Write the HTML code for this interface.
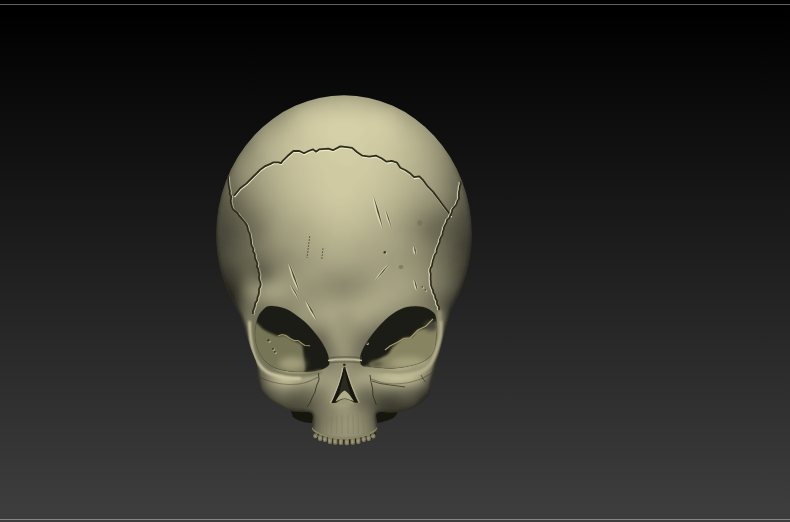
<!DOCTYPE html>
<html><head><meta charset="utf-8">
<style>
html,body{margin:0;padding:0;width:790px;height:522px;overflow:hidden;background:#000;font-family:"Liberation Sans",sans-serif;}
svg{display:block;position:absolute;left:0;top:0;}
</style></head>
<body>
<svg width="790" height="522" viewBox="0 0 790 522">
<defs>
  <linearGradient id="bg" x1="0" y1="0" x2="0" y2="522" gradientUnits="userSpaceOnUse">
    <stop offset="0" stop-color="#000"/>
    <stop offset="0.023" stop-color="#000"/>
    <stop offset="0.977" stop-color="#3d3d3d"/>
    <stop offset="1" stop-color="#3d3d3d"/>
  </linearGradient>
  <linearGradient id="og" x1="0" y1="140" x2="0" y2="260" gradientUnits="userSpaceOnUse">
    <stop offset="0" stop-color="#2c2b20" stop-opacity="0"/>
    <stop offset="1" stop-color="#2c2b20" stop-opacity="1"/>
  </linearGradient>
  <filter id="b05" x="-50%" y="-50%" width="200%" height="200%"><feGaussianBlur stdDeviation="0.5"/></filter>
  <filter id="b1" x="-50%" y="-50%" width="200%" height="200%"><feGaussianBlur stdDeviation="1"/></filter>
  <filter id="b15" x="-50%" y="-50%" width="200%" height="200%"><feGaussianBlur stdDeviation="1.5"/></filter>
  <filter id="b2" x="-50%" y="-50%" width="200%" height="200%"><feGaussianBlur stdDeviation="2"/></filter>
  <filter id="b3" x="-50%" y="-50%" width="200%" height="200%"><feGaussianBlur stdDeviation="3"/></filter>
  <filter id="b4" x="-50%" y="-50%" width="200%" height="200%"><feGaussianBlur stdDeviation="4"/></filter>
  <filter id="fb" x="-5%" y="-5%" width="110%" height="110%"><feGaussianBlur stdDeviation="2.5"/></filter>
  <clipPath id="sil"><path d="M450.5,310.0 C449.8,313.8 447.7,320.7 446.5,325.0 C445.3,329.3 444.6,331.8 443.5,336.0 C442.4,340.2 441.3,345.2 440.0,350.0 C438.7,354.8 436.8,360.0 435.5,365.0 C434.2,370.0 432.9,375.3 432.0,380.0 C431.1,384.7 431.2,389.8 430.0,393.0 C428.8,396.2 427.4,396.7 425.0,399.0 C422.6,401.3 419.0,404.8 415.6,406.7 C412.2,408.6 408.7,409.5 404.8,410.5 C400.9,411.5 396.6,412.1 392.0,412.5 C387.4,412.9 379.4,410.8 377.0,413.0 C374.6,415.2 377.7,422.8 377.5,426.0 C377.3,429.2 378.6,430.5 376.0,432.5 C373.4,434.5 367.2,436.9 362.0,438.2 C356.8,439.5 350.3,440.2 344.5,440.2 C338.7,440.2 332.2,439.5 327.0,438.2 C321.8,436.9 315.5,434.5 313.0,432.5 C310.5,430.5 312.1,429.2 311.8,426.0 C311.6,422.8 314.7,415.4 311.5,413.0 C308.3,410.6 296.9,412.0 292.5,411.3 C288.1,410.6 287.6,410.3 284.8,409.0 C282.0,407.7 278.5,405.3 275.7,403.6 C272.9,401.9 270.6,401.0 268.0,399.0 C265.4,397.0 262.0,394.6 260.3,391.4 C258.6,388.2 258.6,384.4 258.0,380.0 C257.4,375.6 258.1,370.0 257.0,365.0 C255.9,360.0 253.2,354.8 251.5,350.0 C249.8,345.2 248.3,340.3 247.0,336.0 C245.7,331.7 244.7,327.3 243.7,324.0 C242.7,320.7 241.5,319.0 240.9,316.0 C240.3,313.0 237.5,309.3 240.0,306.0 C242.5,302.7 246.0,297.8 256.0,296.0 C266.0,294.2 277.7,295.2 300.0,295.0 C322.3,294.8 366.7,294.8 390.0,295.0 C413.3,295.2 429.8,294.8 440.0,296.0 C450.2,297.2 449.2,299.7 451.0,302.0 C452.8,304.3 451.2,306.2 450.5,310.0 Z"/><path d="M216.3,234 A127.7,138.7 0 1,1 471.7,234 A127.7,138.7 0 1,1 216.3,234 Z"/></clipPath>
  <clipPath id="lsockc"><path d="M270.0,306.0 C274.0,305.7 281.0,307.0 286.0,309.0 C291.0,311.0 296.3,315.3 300.0,318.0 C303.7,320.7 305.5,322.5 308.0,325.0 C310.5,327.5 312.8,330.3 315.0,333.0 C317.2,335.7 319.2,338.2 321.0,341.0 C322.8,343.8 324.7,347.0 326.0,350.0 C327.3,353.0 328.7,356.3 329.0,359.0 C329.3,361.7 330.2,364.0 328.0,366.0 C325.8,368.0 321.1,370.0 316.0,371.0 C310.9,372.0 303.8,372.3 297.5,372.0 C291.2,371.7 283.2,370.7 278.0,369.0 C272.8,367.3 269.3,365.2 266.0,362.0 C262.7,358.8 259.8,354.3 258.0,350.0 C256.2,345.7 255.2,341.0 255.0,336.0 C254.8,331.0 255.8,324.2 257.0,320.0 C258.2,315.8 259.8,313.3 262.0,311.0 C264.2,308.7 266.0,306.3 270.0,306.0 Z"/></clipPath>
  <clipPath id="rsockc"><path d="M407.0,307.0 C411.8,306.0 418.5,306.0 423.0,307.0 C427.5,308.0 431.7,310.5 434.0,313.0 C436.3,315.5 436.2,318.5 436.7,322.0 C437.1,325.5 437.1,329.2 436.7,334.0 C436.2,338.8 435.8,346.1 434.0,350.5 C432.2,354.9 429.6,357.7 425.7,360.2 C421.8,362.7 416.0,364.3 410.5,365.7 C405.0,367.1 398.4,368.1 392.6,368.4 C386.9,368.7 380.9,367.9 376.0,367.5 C371.1,367.1 365.7,367.2 363.0,366.0 C360.3,364.8 360.1,362.7 360.0,360.0 C359.9,357.3 360.7,354.0 362.5,350.0 C364.3,346.0 367.6,340.6 371.0,336.0 C374.4,331.4 378.8,326.4 382.6,322.6 C386.4,318.8 389.9,315.6 394.0,313.0 C398.1,310.4 402.2,308.0 407.0,307.0 Z"/></clipPath>
</defs>
<rect x="0" y="0" width="790" height="522" fill="url(#bg)"/>
<rect x="0" y="4" width="790" height="1" fill="#626262"/>
<rect x="0" y="519" width="790" height="1" fill="#868686"/>

<path d="M290,409 C298,412 306,412 314,412 L314,423 C305,423 298,421 293,417 Z" fill="#17160f" filter="url(#b05)"/>
<path d="M376,412 C386,412 394,412 398,410 C397,417 392,421 376,423 Z" fill="#17160f" filter="url(#b05)"/>
<g clip-path="url(#sil)"><g filter="url(#fb)">
<path fill="#8a876c" d="M308 90h4v4h-4zM300 94h4v4h-4zM384 94h4v4h-4zM396 98h4v4h-4zM276 110h4v4h-4zM264 118h4v4h-4zM260 122h4v4h-4zM440 138h4v4h-4zM248 146h4v4h-4zM240 162h4v4h-4zM444 162h4v4h-4zM444 166h4v4h-4zM444 170h4v4h-4zM444 174h4v4h-4zM240 178h4v4h-4zM244 186h4v4h-4zM248 194h4v4h-4zM440 194h4v4h-4zM436 202h4v4h-4zM256 206h4v4h-4zM424 210h4v4h-4zM260 214h4v4h-4zM420 214h4v4h-4zM264 222h4v4h-4zM416 222h4v4h-4zM416 234h4v4h-4zM416 238h4v4h-4zM268 242h4v4h-4zM420 246h4v4h-4zM272 250h4v4h-4zM420 250h4v4h-4zM276 254h4v4h-4zM420 254h4v4h-4zM280 258h4v4h-4zM280 262h4v4h-4zM424 262h4v4h-4zM280 266h4v4h-4zM424 266h4v4h-4zM424 286h4v4h-4zM252 294h4v4h-4zM420 294h4v4h-4zM260 298h4v4h-4zM268 302h4v4h-4zM416 302h4v4h-4zM280 306h8v4h-8zM412 306h4v4h-4zM288 310h4v4h-4zM408 310h8v4h-8zM400 314h8v4h-8zM292 318h4v4h-4zM384 318h4v4h-4zM296 322h4v4h-4zM316 326h4v4h-4zM324 330h4v4h-4zM352 338h4v4h-4zM420 350h8v4h-8zM404 354h8v4h-8zM296 358h4v4h-4zM336 358h4v4h-4zM348 358h4v4h-4zM312 362h4v4h-4zM336 362h4v4h-4zM384 362h4v4h-4zM324 366h8v4h-8zM428 366h4v4h-4zM276 386h4v4h-4zM292 386h4v4h-4zM316 386h4v4h-4zM400 386h4v4h-4zM352 394h4v4h-4zM328 402h4v4h-4zM352 406h4v4h-4zM332 410h4v4h-4zM332 414h4v4h-4zM356 414h4v4h-4zM332 418h4v4h-4zM360 422h4v4h-4zM328 426h4v4h-4zM324 438h4v4h-4zM364 438h4v4h-4zM324 442h4v4h-4zM364 442h4v4h-4zM324 446h4v4h-4zM360 446h4v4h-4zM324 450h8v4h-8zM356 450h8v4h-8z"/><path fill="#908d71" d="M312 90h4v4h-4zM372 90h4v4h-4zM304 94h4v4h-4zM380 94h4v4h-4zM388 98h4v4h-4zM400 102h4v4h-4zM284 106h4v4h-4zM408 106h4v4h-4zM280 110h4v4h-4zM416 110h4v4h-4zM420 114h4v4h-4zM268 118h4v4h-4zM424 118h4v4h-4zM264 122h4v4h-4zM428 122h4v4h-4zM260 126h4v4h-4zM432 126h4v4h-4zM436 134h4v4h-4zM252 142h4v4h-4zM248 150h4v4h-4zM440 150h4v4h-4zM440 154h4v4h-4zM244 158h4v4h-4zM440 158h4v4h-4zM440 162h4v4h-4zM440 170h4v4h-4zM440 174h4v4h-4zM244 178h4v4h-4zM440 178h4v4h-4zM440 182h4v4h-4zM248 186h4v4h-4zM252 194h4v4h-4zM436 194h4v4h-4zM260 206h4v4h-4zM424 206h4v4h-4zM420 210h4v4h-4zM264 214h4v4h-4zM416 214h4v4h-4zM412 222h4v4h-4zM268 226h4v4h-4zM268 230h4v4h-4zM412 234h4v4h-4zM412 238h4v4h-4zM272 242h4v4h-4zM276 246h4v4h-4zM280 250h4v4h-4zM416 250h4v4h-4zM284 254h4v4h-4zM416 254h4v4h-4zM284 258h4v4h-4zM416 258h4v4h-4zM284 266h4v4h-4zM420 266h4v4h-4zM420 270h4v4h-4zM340 278h8v4h-8zM332 282h8v4h-8zM348 282h8v4h-8zM256 286h4v4h-4zM328 286h12v4h-12zM348 286h4v4h-4zM420 286h4v4h-4zM252 290h4v4h-4zM336 290h12v4h-12zM256 294h4v4h-4zM416 294h4v4h-4zM264 298h4v4h-4zM276 302h16v4h-16zM292 306h4v4h-4zM408 306h4v4h-4zM292 310h4v4h-4zM400 310h4v4h-4zM388 314h4v4h-4zM296 318h4v4h-4zM380 318h4v4h-4zM312 322h4v4h-4zM360 326h4v4h-4zM352 330h4v4h-4zM348 338h4v4h-4zM348 342h4v4h-4zM348 346h4v4h-4zM336 350h4v4h-4zM344 354h4v4h-4zM416 354h4v4h-4zM288 358h4v4h-4zM340 358h8v4h-8zM428 358h4v4h-4zM308 362h4v4h-4zM340 362h8v4h-8zM336 366h4v4h-4zM348 366h4v4h-4zM360 366h4v4h-4zM268 374h4v4h-4zM268 378h4v4h-4zM420 378h4v4h-4zM356 386h4v4h-4zM328 398h4v4h-4zM336 410h4v4h-4zM336 414h4v4h-4zM352 414h4v4h-4zM336 418h4v4h-4zM356 422h4v4h-4zM332 426h4v4h-4zM356 426h4v4h-4zM332 430h4v4h-4zM356 430h4v4h-4zM332 434h4v4h-4zM356 434h4v4h-4zM332 438h8v4h-8zM352 438h8v4h-8zM332 442h24v4h-24zM336 446h16v4h-16z"/><path fill="#939073" d="M316 90h4v4h-4zM300 98h4v4h-4zM292 102h4v4h-4zM412 110h4v4h-4zM276 114h4v4h-4zM432 130h4v4h-4zM256 134h4v4h-4zM436 138h4v4h-4zM436 142h4v4h-4zM248 154h4v4h-4zM244 162h4v4h-4zM244 166h4v4h-4zM440 166h4v4h-4zM244 174h4v4h-4zM248 182h4v4h-4zM252 190h4v4h-4zM436 190h4v4h-4zM256 198h4v4h-4zM432 198h4v4h-4zM428 202h4v4h-4zM264 210h4v4h-4zM268 218h4v4h-4zM412 218h4v4h-4zM268 222h4v4h-4zM408 226h4v4h-4zM408 230h4v4h-4zM408 234h4v4h-4zM272 238h4v4h-4zM412 242h4v4h-4zM412 246h4v4h-4zM284 250h4v4h-4zM412 250h4v4h-4zM288 254h4v4h-4zM412 254h4v4h-4zM288 258h4v4h-4zM412 258h4v4h-4zM288 262h4v4h-4zM416 262h4v4h-4zM288 266h4v4h-4zM416 266h4v4h-4zM284 270h4v4h-4zM280 274h4v4h-4zM420 274h4v4h-4zM276 278h4v4h-4zM332 278h8v4h-8zM348 278h8v4h-8zM420 278h4v4h-4zM268 282h4v4h-4zM324 282h8v4h-8zM356 282h4v4h-4zM420 282h4v4h-4zM260 286h4v4h-4zM324 286h4v4h-4zM352 286h8v4h-8zM256 290h4v4h-4zM328 290h8v4h-8zM348 290h4v4h-4zM416 290h4v4h-4zM260 294h4v4h-4zM268 298h4v4h-4zM288 298h4v4h-4zM412 298h4v4h-4zM292 302h4v4h-4zM408 302h4v4h-4zM296 306h4v4h-4zM404 306h4v4h-4zM296 310h4v4h-4zM396 310h4v4h-4zM296 314h4v4h-4zM384 314h4v4h-4zM300 318h4v4h-4zM376 318h4v4h-4zM316 322h4v4h-4zM368 322h4v4h-4zM324 326h4v4h-4zM356 326h4v4h-4zM328 330h4v4h-4zM348 334h4v4h-4zM332 338h4v4h-4zM336 346h4v4h-4zM340 354h4v4h-4zM400 358h12v4h-12zM304 362h4v4h-4zM388 362h4v4h-4zM276 366h4v4h-4zM316 366h4v4h-4zM340 366h8v4h-8zM364 366h4v4h-4zM272 370h4v4h-4zM324 370h16v4h-16zM348 370h4v4h-4zM280 386h8v4h-8zM324 386h4v4h-4zM352 390h4v4h-4zM328 394h4v4h-4zM348 406h4v4h-4zM348 410h4v4h-4zM340 414h4v4h-4zM348 414h4v4h-4zM352 418h4v4h-4zM336 422h4v4h-4zM352 422h4v4h-4zM336 426h4v4h-4zM336 430h4v4h-4zM352 430h4v4h-4zM336 434h8v4h-8zM348 434h8v4h-8zM340 438h12v4h-12z"/><path fill="#999578" d="M320 90h8v4h-8zM364 90h4v4h-4zM312 94h4v4h-4zM304 98h4v4h-4zM296 102h4v4h-4zM392 102h4v4h-4zM284 110h4v4h-4zM408 110h4v4h-4zM280 114h4v4h-4zM264 126h4v4h-4zM428 130h4v4h-4zM256 138h4v4h-4zM432 138h4v4h-4zM252 150h4v4h-4zM436 154h4v4h-4zM436 158h4v4h-4zM248 162h4v4h-4zM436 162h4v4h-4zM248 166h4v4h-4zM436 166h4v4h-4zM248 170h4v4h-4zM436 170h4v4h-4zM248 174h4v4h-4zM436 174h4v4h-4zM252 182h4v4h-4zM256 190h4v4h-4zM432 190h4v4h-4zM428 194h4v4h-4zM260 198h4v4h-4zM424 198h4v4h-4zM420 202h4v4h-4zM416 206h4v4h-4zM268 210h4v4h-4zM412 210h4v4h-4zM408 218h4v4h-4zM272 222h4v4h-4zM272 226h4v4h-4zM404 226h4v4h-4zM404 230h4v4h-4zM276 234h4v4h-4zM404 234h4v4h-4zM404 238h4v4h-4zM280 242h4v4h-4zM404 242h4v4h-4zM284 246h4v4h-4zM404 246h4v4h-4zM404 250h4v4h-4zM292 254h4v4h-4zM404 254h4v4h-4zM296 258h4v4h-4zM404 258h4v4h-4zM296 262h4v4h-4zM404 262h8v4h-8zM296 266h4v4h-4zM408 266h4v4h-4zM292 270h8v4h-8zM412 270h4v4h-4zM288 274h8v4h-8zM324 274h8v4h-8zM356 274h8v4h-8zM412 274h4v4h-4zM280 278h8v4h-8zM316 278h8v4h-8zM360 278h8v4h-8zM416 278h4v4h-4zM272 282h4v4h-4zM304 282h12v4h-12zM364 282h4v4h-4zM416 282h4v4h-4zM264 286h4v4h-4zM300 286h8v4h-8zM360 286h4v4h-4zM260 290h4v4h-4zM296 290h12v4h-12zM356 290h4v4h-4zM412 290h4v4h-4zM264 294h4v4h-4zM288 294h44v4h-44zM348 294h8v4h-8zM304 298h8v4h-8zM304 302h4v4h-4zM400 302h4v4h-4zM300 306h4v4h-4zM396 306h4v4h-4zM300 310h4v4h-4zM388 310h4v4h-4zM300 314h8v4h-8zM380 314h4v4h-4zM312 318h4v4h-4zM320 322h4v4h-4zM360 322h4v4h-4zM328 326h4v4h-4zM344 326h8v4h-8zM344 330h4v4h-4zM332 334h4v4h-4zM336 338h8v4h-8zM340 342h4v4h-4zM340 346h4v4h-4zM300 362h4v4h-4zM392 362h4v4h-4zM428 362h4v4h-4zM312 366h4v4h-4zM372 366h8v4h-8zM360 370h4v4h-4zM324 374h32v4h-32zM348 378h4v4h-4zM300 382h12v4h-12zM324 382h4v4h-4zM356 382h8v4h-8zM372 382h4v4h-4zM412 382h4v4h-4zM328 386h4v4h-4zM352 386h4v4h-4zM348 398h4v4h-4zM344 406h4v4h-4zM344 422h8v4h-8zM344 426h8v4h-8z"/><path fill="#9c987a" d="M328 90h4v4h-4zM356 90h8v4h-8zM372 94h4v4h-4zM380 98h4v4h-4zM388 102h4v4h-4zM400 106h4v4h-4zM412 114h4v4h-4zM276 118h4v4h-4zM416 118h4v4h-4zM272 122h4v4h-4zM420 122h4v4h-4zM424 126h4v4h-4zM260 134h4v4h-4zM428 134h4v4h-4zM256 142h4v4h-4zM432 142h4v4h-4zM432 146h4v4h-4zM252 154h4v4h-4zM252 158h4v4h-4zM252 178h4v4h-4zM432 178h4v4h-4zM432 182h4v4h-4zM256 186h4v4h-4zM432 186h4v4h-4zM428 190h4v4h-4zM260 194h4v4h-4zM264 202h4v4h-4zM268 206h4v4h-4zM272 214h4v4h-4zM408 214h4v4h-4zM272 218h4v4h-4zM404 222h4v4h-4zM276 230h4v4h-4zM280 238h4v4h-4zM284 242h4v4h-4zM288 246h4v4h-4zM292 250h4v4h-4zM400 250h4v4h-4zM296 254h4v4h-4zM400 254h4v4h-4zM300 258h4v4h-4zM400 258h4v4h-4zM300 262h4v4h-4zM400 262h4v4h-4zM300 266h4v4h-4zM404 266h4v4h-4zM300 270h4v4h-4zM324 270h40v4h-40zM408 270h4v4h-4zM296 274h12v4h-12zM316 274h8v4h-8zM364 274h8v4h-8zM408 274h4v4h-4zM288 278h28v4h-28zM368 278h4v4h-4zM412 278h4v4h-4zM276 282h4v4h-4zM288 282h16v4h-16zM368 282h4v4h-4zM412 282h4v4h-4zM292 286h8v4h-8zM364 286h4v4h-4zM412 286h4v4h-4zM264 290h4v4h-4zM288 290h8v4h-8zM360 290h4v4h-4zM268 294h4v4h-4zM280 294h8v4h-8zM356 294h4v4h-4zM408 294h4v4h-4zM312 298h36v4h-36zM404 298h4v4h-4zM308 302h8v4h-8zM396 302h4v4h-4zM304 306h8v4h-8zM392 306h4v4h-4zM304 310h8v4h-8zM384 310h4v4h-4zM308 314h4v4h-4zM376 314h4v4h-4zM316 318h4v4h-4zM368 318h4v4h-4zM324 322h4v4h-4zM344 322h16v4h-16zM340 326h4v4h-4zM332 330h4v4h-4zM340 330h4v4h-4zM336 334h8v4h-8zM416 358h4v4h-4zM296 362h4v4h-4zM412 362h4v4h-4zM308 366h4v4h-4zM380 366h4v4h-4zM316 370h4v4h-4zM364 370h4v4h-4zM320 374h4v4h-4zM320 378h8v4h-8zM340 378h8v4h-8zM352 378h4v4h-4zM296 382h4v4h-4zM328 382h4v4h-4zM348 382h8v4h-8zM348 390h4v4h-4zM332 394h4v4h-4zM348 394h4v4h-4zM332 398h4v4h-4zM340 406h4v4h-4z"/><path fill="#9f9b7d" d="M332 90h24v4h-24zM316 94h4v4h-4zM368 94h4v4h-4zM308 98h4v4h-4zM300 102h4v4h-4zM292 106h4v4h-4zM288 110h4v4h-4zM404 110h4v4h-4zM268 126h4v4h-4zM264 130h4v4h-4zM424 130h4v4h-4zM428 138h4v4h-4zM256 146h4v4h-4zM432 150h4v4h-4zM432 154h4v4h-4zM432 158h4v4h-4zM252 162h4v4h-4zM432 162h4v4h-4zM252 166h4v4h-4zM432 166h4v4h-4zM252 170h4v4h-4zM432 170h4v4h-4zM252 174h4v4h-4zM432 174h4v4h-4zM256 182h4v4h-4zM428 186h4v4h-4zM260 190h4v4h-4zM424 194h4v4h-4zM264 198h4v4h-4zM420 198h4v4h-4zM416 202h4v4h-4zM412 206h4v4h-4zM272 210h4v4h-4zM408 210h4v4h-4zM404 214h4v4h-4zM404 218h4v4h-4zM276 222h4v4h-4zM400 222h4v4h-4zM276 226h4v4h-4zM400 226h4v4h-4zM280 230h4v4h-4zM400 230h4v4h-4zM280 234h8v4h-8zM400 234h4v4h-4zM284 238h4v4h-4zM400 238h4v4h-4zM288 242h4v4h-4zM400 242h4v4h-4zM292 246h4v4h-4zM396 246h8v4h-8zM296 250h4v4h-4zM396 250h4v4h-4zM300 254h8v4h-8zM392 254h8v4h-8zM304 258h4v4h-4zM388 258h12v4h-12zM304 262h8v4h-8zM388 262h12v4h-12zM304 266h8v4h-8zM344 266h24v4h-24zM392 266h12v4h-12zM304 270h20v4h-20zM364 270h12v4h-12zM400 270h8v4h-8zM308 274h8v4h-8zM372 274h4v4h-4zM404 274h4v4h-4zM372 278h4v4h-4zM408 278h4v4h-4zM280 282h8v4h-8zM372 282h4v4h-4zM408 282h4v4h-4zM268 286h4v4h-4zM284 286h8v4h-8zM368 286h4v4h-4zM408 286h4v4h-4zM284 290h4v4h-4zM364 290h4v4h-4zM408 290h4v4h-4zM272 294h8v4h-8zM360 294h4v4h-4zM404 294h4v4h-4zM348 298h8v4h-8zM400 298h4v4h-4zM316 302h8v4h-8zM392 302h4v4h-4zM312 306h4v4h-4zM388 306h4v4h-4zM312 310h4v4h-4zM380 310h4v4h-4zM312 314h4v4h-4zM372 314h4v4h-4zM320 318h4v4h-4zM340 318h12v4h-12zM364 318h4v4h-4zM328 322h4v4h-4zM336 322h8v4h-8zM332 326h8v4h-8zM336 330h4v4h-4zM284 362h4v4h-4zM292 362h4v4h-4zM396 362h4v4h-4zM408 362h4v4h-4zM316 374h4v4h-4zM356 374h4v4h-4zM420 374h4v4h-4zM316 378h4v4h-4zM328 378h12v4h-12zM332 382h4v4h-4zM340 382h8v4h-8zM376 382h4v4h-4zM332 386h4v4h-4zM348 386h4v4h-4zM332 390h4v4h-4zM336 402h4v4h-4z"/><path fill="#969376" d="M368 90h4v4h-4zM308 94h4v4h-4zM376 94h4v4h-4zM384 98h4v4h-4zM396 102h4v4h-4zM288 106h4v4h-4zM404 106h4v4h-4zM416 114h4v4h-4zM272 118h4v4h-4zM420 118h4v4h-4zM268 122h4v4h-4zM424 122h4v4h-4zM428 126h4v4h-4zM260 130h4v4h-4zM432 134h4v4h-4zM252 146h4v4h-4zM436 146h4v4h-4zM436 150h4v4h-4zM248 158h4v4h-4zM244 170h4v4h-4zM248 178h4v4h-4zM436 178h4v4h-4zM436 182h4v4h-4zM252 186h4v4h-4zM436 186h4v4h-4zM256 194h4v4h-4zM432 194h4v4h-4zM428 198h4v4h-4zM260 202h4v4h-4zM424 202h4v4h-4zM264 206h4v4h-4zM420 206h4v4h-4zM416 210h4v4h-4zM268 214h4v4h-4zM412 214h4v4h-4zM408 222h4v4h-4zM272 230h4v4h-4zM272 234h4v4h-4zM276 238h4v4h-4zM408 238h4v4h-4zM276 242h4v4h-4zM408 242h4v4h-4zM280 246h4v4h-4zM408 246h4v4h-4zM288 250h4v4h-4zM408 250h4v4h-4zM408 254h4v4h-4zM292 258h4v4h-4zM408 258h4v4h-4zM292 262h4v4h-4zM412 262h4v4h-4zM292 266h4v4h-4zM412 266h4v4h-4zM288 270h4v4h-4zM416 270h4v4h-4zM284 274h4v4h-4zM332 274h24v4h-24zM416 274h4v4h-4zM324 278h8v4h-8zM356 278h4v4h-4zM316 282h8v4h-8zM360 282h4v4h-4zM308 286h16v4h-16zM416 286h4v4h-4zM308 290h20v4h-20zM352 290h4v4h-4zM332 294h16v4h-16zM412 294h4v4h-4zM272 298h16v4h-16zM292 298h12v4h-12zM408 298h4v4h-4zM296 302h8v4h-8zM404 302h4v4h-4zM400 306h4v4h-4zM392 310h4v4h-4zM304 318h8v4h-8zM372 318h4v4h-4zM364 322h4v4h-4zM352 326h4v4h-4zM348 330h4v4h-4zM344 334h4v4h-4zM344 338h4v4h-4zM336 342h4v4h-4zM344 342h4v4h-4zM344 346h4v4h-4zM340 350h8v4h-8zM420 354h8v4h-8zM412 358h4v4h-4zM280 362h4v4h-4zM368 366h4v4h-4zM320 370h4v4h-4zM340 370h8v4h-8zM352 370h8v4h-8zM424 370h4v4h-4zM272 382h4v4h-4zM312 382h12v4h-12zM364 382h8v4h-8zM328 390h4v4h-4zM332 402h4v4h-4zM348 402h4v4h-4zM336 406h4v4h-4zM340 410h8v4h-8zM344 414h4v4h-4zM340 418h12v4h-12zM340 422h4v4h-4zM340 426h4v4h-4zM352 426h4v4h-4zM340 430h12v4h-12zM344 434h4v4h-4z"/><path fill="#8d8a6f" d="M376 90h4v4h-4zM296 98h4v4h-4zM392 98h4v4h-4zM288 102h4v4h-4zM404 102h4v4h-4zM272 114h4v4h-4zM256 130h4v4h-4zM436 130h4v4h-4zM252 138h4v4h-4zM440 142h4v4h-4zM440 146h4v4h-4zM244 154h4v4h-4zM240 166h4v4h-4zM240 170h4v4h-4zM240 174h4v4h-4zM244 182h4v4h-4zM440 186h4v4h-4zM248 190h4v4h-4zM440 190h4v4h-4zM252 198h4v4h-4zM436 198h4v4h-4zM256 202h4v4h-4zM432 202h4v4h-4zM428 206h4v4h-4zM260 210h4v4h-4zM264 218h4v4h-4zM416 218h4v4h-4zM412 226h4v4h-4zM412 230h4v4h-4zM268 234h4v4h-4zM268 238h4v4h-4zM416 242h4v4h-4zM272 246h4v4h-4zM416 246h4v4h-4zM276 250h4v4h-4zM280 254h4v4h-4zM420 258h4v4h-4zM284 262h4v4h-4zM420 262h4v4h-4zM280 270h4v4h-4zM424 270h4v4h-4zM276 274h4v4h-4zM424 274h4v4h-4zM272 278h4v4h-4zM424 278h4v4h-4zM264 282h4v4h-4zM340 282h8v4h-8zM424 282h4v4h-4zM252 286h4v4h-4zM340 286h8v4h-8zM420 290h4v4h-4zM416 298h4v4h-4zM272 302h4v4h-4zM412 302h4v4h-4zM288 306h4v4h-4zM404 310h4v4h-4zM292 314h4v4h-4zM392 314h8v4h-8zM300 322h12v4h-12zM372 322h4v4h-4zM320 326h4v4h-4zM364 326h4v4h-4zM356 330h4v4h-4zM328 334h4v4h-4zM352 334h4v4h-4zM332 342h4v4h-4zM348 350h4v4h-4zM336 354h4v4h-4zM348 354h4v4h-4zM412 354h4v4h-4zM284 358h4v4h-4zM292 358h4v4h-4zM396 358h4v4h-4zM348 362h4v4h-4zM320 366h4v4h-4zM332 366h4v4h-4zM352 366h8v4h-8zM416 382h4v4h-4zM288 386h4v4h-4zM320 386h4v4h-4zM324 390h4v4h-4zM332 406h4v4h-4zM352 410h4v4h-4zM356 418h4v4h-4zM332 422h4v4h-4zM360 426h4v4h-4zM328 430h4v4h-4zM360 430h4v4h-4zM328 434h4v4h-4zM360 434h4v4h-4zM328 438h4v4h-4zM360 438h4v4h-4zM328 442h4v4h-4zM356 442h8v4h-8zM328 446h8v4h-8zM352 446h8v4h-8zM332 450h24v4h-24z"/><path fill="#848168" d="M296 94h4v4h-4zM284 102h4v4h-4zM276 106h4v4h-4zM272 110h4v4h-4zM252 130h4v4h-4zM444 142h4v4h-4zM240 154h4v4h-4zM236 166h4v4h-4zM236 170h4v4h-4zM236 174h4v4h-4zM240 186h4v4h-4zM444 190h4v4h-4zM444 194h4v4h-4zM248 198h4v4h-4zM440 202h4v4h-4zM252 206h4v4h-4zM436 206h4v4h-4zM424 214h4v4h-4zM260 218h4v4h-4zM420 238h4v4h-4zM264 242h4v4h-4zM264 246h4v4h-4zM424 246h4v4h-4zM268 250h4v4h-4zM424 250h4v4h-4zM272 254h4v4h-4zM276 262h4v4h-4zM428 262h4v4h-4zM276 266h4v4h-4zM272 274h4v4h-4zM268 278h4v4h-4zM256 282h4v4h-4zM248 286h4v4h-4zM428 286h4v4h-4zM248 290h4v4h-4zM424 294h4v4h-4zM252 298h4v4h-4zM264 302h4v4h-4zM420 302h4v4h-4zM272 306h4v4h-4zM420 306h4v4h-4zM280 310h4v4h-4zM420 310h4v4h-4zM284 314h4v4h-4zM420 314h8v4h-8zM288 318h4v4h-4zM396 318h24v4h-24zM432 318h4v4h-4zM292 322h4v4h-4zM380 322h4v4h-4zM416 322h8v4h-8zM308 326h4v4h-4zM420 326h4v4h-4zM432 326h4v4h-4zM424 330h8v4h-8zM352 346h4v4h-4zM332 350h4v4h-4zM352 350h4v4h-4zM408 350h8v4h-8zM428 350h4v4h-4zM332 354h4v4h-4zM352 354h4v4h-4zM400 354h4v4h-4zM304 358h4v4h-4zM332 358h4v4h-4zM352 358h4v4h-4zM392 358h4v4h-4zM260 362h4v4h-4zM276 362h4v4h-4zM320 362h4v4h-4zM328 362h4v4h-4zM356 362h8v4h-8zM424 374h4v4h-4zM268 382h4v4h-4zM300 386h4v4h-4zM364 386h16v4h-16zM320 390h4v4h-4zM356 390h4v4h-4zM324 398h4v4h-4zM328 410h4v4h-4zM356 410h4v4h-4zM328 414h4v4h-4zM360 414h4v4h-4zM328 418h4v4h-4zM324 426h4v4h-4zM364 426h4v4h-4zM368 438h4v4h-4zM368 442h4v4h-4zM320 450h4v4h-4zM364 450h4v4h-4z"/><path fill="#a29e7f" d="M320 94h4v4h-4zM364 94h4v4h-4zM376 98h4v4h-4zM384 102h4v4h-4zM396 106h4v4h-4zM284 114h4v4h-4zM408 114h4v4h-4zM280 118h4v4h-4zM412 118h4v4h-4zM276 122h4v4h-4zM416 122h4v4h-4zM420 126h4v4h-4zM260 138h4v4h-4zM428 142h4v4h-4zM256 150h4v4h-4zM256 154h4v4h-4zM256 158h4v4h-4zM256 170h4v4h-4zM256 174h4v4h-4zM256 178h4v4h-4zM428 178h4v4h-4zM260 182h4v4h-4zM428 182h4v4h-4zM260 186h4v4h-4zM424 190h4v4h-4zM264 194h4v4h-4zM420 194h4v4h-4zM416 198h4v4h-4zM268 202h4v4h-4zM412 202h4v4h-4zM272 206h4v4h-4zM408 206h4v4h-4zM276 214h4v4h-4zM276 218h4v4h-4zM400 218h4v4h-4zM280 222h4v4h-4zM280 226h4v4h-4zM396 226h4v4h-4zM284 230h4v4h-4zM396 230h4v4h-4zM288 234h4v4h-4zM396 234h4v4h-4zM288 238h8v4h-8zM396 238h4v4h-4zM292 242h4v4h-4zM396 242h4v4h-4zM296 246h8v4h-8zM392 246h4v4h-4zM300 250h8v4h-8zM388 250h8v4h-8zM308 254h4v4h-4zM384 254h8v4h-8zM308 258h8v4h-8zM380 258h8v4h-8zM312 262h8v4h-8zM356 262h32v4h-32zM312 266h32v4h-32zM368 266h24v4h-24zM376 270h24v4h-24zM376 274h28v4h-28zM376 278h8v4h-8zM400 278h8v4h-8zM376 282h4v4h-4zM404 282h4v4h-4zM272 286h12v4h-12zM372 286h4v4h-4zM404 286h4v4h-4zM268 290h16v4h-16zM368 290h4v4h-4zM400 290h8v4h-8zM364 294h4v4h-4zM400 294h4v4h-4zM356 298h4v4h-4zM396 298h4v4h-4zM324 302h24v4h-24zM388 302h4v4h-4zM316 306h8v4h-8zM384 306h4v4h-4zM316 310h4v4h-4zM376 310h4v4h-4zM316 314h4v4h-4zM340 314h12v4h-12zM368 314h4v4h-4zM324 318h4v4h-4zM336 318h4v4h-4zM352 318h12v4h-12zM332 322h4v4h-4zM420 358h8v4h-8zM288 362h4v4h-4zM400 362h8v4h-8zM416 362h4v4h-4zM304 366h4v4h-4zM384 366h4v4h-4zM312 370h4v4h-4zM368 370h4v4h-4zM272 374h4v4h-4zM360 374h4v4h-4zM272 378h4v4h-4zM312 378h4v4h-4zM356 378h12v4h-12zM276 382h4v4h-4zM292 382h4v4h-4zM336 382h4v4h-4zM380 382h4v4h-4zM408 382h4v4h-4zM336 386h4v4h-4zM344 386h4v4h-4zM340 402h8v4h-8z"/><path fill="#a5a182" d="M324 94h8v4h-8zM360 94h4v4h-4zM312 98h4v4h-4zM372 98h4v4h-4zM304 102h4v4h-4zM400 110h4v4h-4zM272 126h4v4h-4zM268 130h4v4h-4zM420 130h4v4h-4zM264 134h4v4h-4zM424 134h4v4h-4zM424 138h4v4h-4zM260 142h4v4h-4zM428 146h4v4h-4zM428 150h4v4h-4zM428 154h4v4h-4zM428 158h4v4h-4zM256 162h4v4h-4zM428 162h4v4h-4zM256 166h4v4h-4zM428 166h4v4h-4zM428 170h4v4h-4zM260 174h4v4h-4zM428 174h4v4h-4zM260 178h4v4h-4zM424 182h4v4h-4zM264 186h4v4h-4zM424 186h4v4h-4zM264 190h4v4h-4zM420 190h4v4h-4zM268 194h4v4h-4zM416 194h4v4h-4zM268 198h4v4h-4zM412 198h4v4h-4zM272 202h4v4h-4zM276 210h4v4h-4zM404 210h4v4h-4zM400 214h4v4h-4zM280 218h4v4h-4zM396 222h4v4h-4zM284 226h8v4h-8zM288 230h8v4h-8zM392 230h4v4h-4zM292 234h4v4h-4zM392 234h4v4h-4zM296 238h4v4h-4zM392 238h4v4h-4zM296 242h8v4h-8zM388 242h8v4h-8zM304 246h4v4h-4zM384 246h8v4h-8zM308 250h4v4h-4zM380 250h8v4h-8zM312 254h4v4h-4zM372 254h12v4h-12zM316 258h4v4h-4zM360 258h20v4h-20zM320 262h36v4h-36zM384 278h16v4h-16zM380 282h24v4h-24zM376 286h28v4h-28zM372 290h8v4h-8zM392 290h8v4h-8zM368 294h4v4h-4zM392 294h8v4h-8zM360 298h4v4h-4zM388 298h8v4h-8zM348 302h8v4h-8zM384 302h4v4h-4zM324 306h28v4h-28zM380 306h4v4h-4zM320 310h8v4h-8zM336 310h16v4h-16zM372 310h4v4h-4zM320 314h8v4h-8zM332 314h8v4h-8zM352 314h4v4h-4zM364 314h4v4h-4zM328 318h8v4h-8zM280 366h4v4h-4zM424 366h4v4h-4zM276 370h4v4h-4zM372 370h4v4h-4zM312 374h4v4h-4zM364 374h4v4h-4zM368 378h4v4h-4zM416 378h4v4h-4zM384 382h8v4h-8zM404 382h4v4h-4zM340 386h4v4h-4zM336 390h4v4h-4zM344 390h4v4h-4zM336 394h4v4h-4zM336 398h4v4h-4z"/><path fill="#a8a484" d="M332 94h28v4h-28zM316 98h4v4h-4zM380 102h4v4h-4zM296 106h4v4h-4zM392 106h4v4h-4zM292 110h4v4h-4zM288 114h4v4h-4zM404 114h4v4h-4zM284 118h4v4h-4zM408 118h4v4h-4zM280 122h4v4h-4zM412 122h4v4h-4zM416 126h4v4h-4zM420 134h4v4h-4zM264 138h4v4h-4zM424 142h4v4h-4zM260 146h4v4h-4zM424 146h4v4h-4zM260 150h4v4h-4zM260 154h4v4h-4zM260 158h4v4h-4zM260 162h4v4h-4zM260 166h4v4h-4zM260 170h4v4h-4zM424 170h4v4h-4zM424 174h4v4h-4zM424 178h4v4h-4zM264 182h4v4h-4zM420 182h4v4h-4zM420 186h4v4h-4zM268 190h4v4h-4zM416 190h4v4h-4zM412 194h4v4h-4zM272 198h4v4h-4zM408 202h4v4h-4zM276 206h4v4h-4zM404 206h4v4h-4zM400 210h4v4h-4zM280 214h4v4h-4zM284 218h4v4h-4zM396 218h4v4h-4zM284 222h8v4h-8zM392 222h4v4h-4zM292 226h4v4h-4zM392 226h4v4h-4zM296 230h4v4h-4zM388 230h4v4h-4zM296 234h8v4h-8zM388 234h4v4h-4zM300 238h4v4h-4zM384 238h8v4h-8zM304 242h4v4h-4zM384 242h4v4h-4zM308 246h4v4h-4zM376 246h8v4h-8zM312 250h4v4h-4zM368 250h12v4h-12zM316 254h8v4h-8zM360 254h12v4h-12zM320 258h8v4h-8zM348 258h12v4h-12zM380 290h12v4h-12zM372 294h20v4h-20zM364 298h12v4h-12zM380 298h8v4h-8zM356 302h8v4h-8zM380 302h4v4h-4zM352 306h4v4h-4zM372 306h8v4h-8zM328 310h8v4h-8zM352 310h8v4h-8zM364 310h8v4h-8zM328 314h4v4h-4zM356 314h8v4h-8zM300 366h4v4h-4zM388 366h4v4h-4zM308 370h4v4h-4zM420 370h4v4h-4zM368 374h4v4h-4zM300 378h12v4h-12zM392 382h12v4h-12zM340 390h4v4h-4zM344 394h4v4h-4zM344 398h4v4h-4z"/><path fill="#87846a" d="M388 94h4v4h-4zM292 98h4v4h-4zM280 106h4v4h-4zM268 114h4v4h-4zM256 126h4v4h-4zM252 134h4v4h-4zM440 134h4v4h-4zM248 142h4v4h-4zM444 146h4v4h-4zM244 150h4v4h-4zM444 150h4v4h-4zM444 154h4v4h-4zM240 158h4v4h-4zM444 158h4v4h-4zM444 178h4v4h-4zM240 182h4v4h-4zM444 182h4v4h-4zM444 186h4v4h-4zM244 190h4v4h-4zM440 198h4v4h-4zM252 202h4v4h-4zM432 206h4v4h-4zM256 210h4v4h-4zM428 210h4v4h-4zM420 218h4v4h-4zM264 226h4v4h-4zM416 226h4v4h-4zM264 230h4v4h-4zM416 230h4v4h-4zM264 234h4v4h-4zM264 238h4v4h-4zM420 242h4v4h-4zM268 246h4v4h-4zM424 254h4v4h-4zM276 258h4v4h-4zM424 258h4v4h-4zM428 266h4v4h-4zM276 270h4v4h-4zM428 270h4v4h-4zM428 274h4v4h-4zM428 278h4v4h-4zM260 282h4v4h-4zM428 282h4v4h-4zM424 290h4v4h-4zM256 298h4v4h-4zM420 298h4v4h-4zM276 306h4v4h-4zM416 306h4v4h-4zM284 310h4v4h-4zM416 310h4v4h-4zM288 314h4v4h-4zM408 314h12v4h-12zM388 318h8v4h-8zM420 318h12v4h-12zM376 322h4v4h-4zM424 322h12v4h-12zM312 326h4v4h-4zM368 326h4v4h-4zM424 326h8v4h-8zM360 330h4v4h-4zM356 334h4v4h-4zM328 338h4v4h-4zM352 342h4v4h-4zM332 346h4v4h-4zM416 350h4v4h-4zM428 354h4v4h-4zM280 358h4v4h-4zM300 358h4v4h-4zM316 362h4v4h-4zM332 362h4v4h-4zM352 362h4v4h-4zM364 362h20v4h-20zM268 370h4v4h-4zM296 386h4v4h-4zM308 386h8v4h-8zM360 386h4v4h-4zM380 386h20v4h-20zM404 386h4v4h-4zM324 394h4v4h-4zM352 398h4v4h-4zM352 402h4v4h-4zM328 406h4v4h-4zM360 418h4v4h-4zM328 422h4v4h-4zM324 430h4v4h-4zM364 430h4v4h-4zM324 434h4v4h-4zM364 434h4v4h-4zM320 438h4v4h-4zM320 442h4v4h-4zM320 446h4v4h-4zM364 446h4v4h-4z"/><path fill="#817e65" d="M288 98h4v4h-4zM264 114h4v4h-4zM260 118h4v4h-4zM256 122h4v4h-4zM248 138h4v4h-4zM444 138h4v4h-4zM244 146h4v4h-4zM236 162h4v4h-4zM448 162h4v4h-4zM448 166h4v4h-4zM448 174h4v4h-4zM236 178h4v4h-4zM244 194h4v4h-4zM444 198h4v4h-4zM248 202h4v4h-4zM432 210h4v4h-4zM256 214h4v4h-4zM428 214h4v4h-4zM424 218h4v4h-4zM260 222h4v4h-4zM420 222h4v4h-4zM420 226h4v4h-4zM420 230h4v4h-4zM420 234h4v4h-4zM424 242h4v4h-4zM268 254h4v4h-4zM428 254h4v4h-4zM272 258h4v4h-4zM428 258h4v4h-4zM432 266h4v4h-4zM432 270h4v4h-4zM432 274h4v4h-4zM432 278h4v4h-4zM252 282h4v4h-4zM432 282h4v4h-4zM428 290h4v4h-4zM248 294h4v4h-4zM260 302h4v4h-4zM268 306h4v4h-4zM276 310h4v4h-4zM424 310h4v4h-4zM428 314h4v4h-4zM284 318h4v4h-4zM288 322h4v4h-4zM384 322h4v4h-4zM412 322h4v4h-4zM300 326h8v4h-8zM372 326h4v4h-4zM416 326h4v4h-4zM320 330h4v4h-4zM364 330h4v4h-4zM420 330h4v4h-4zM432 330h4v4h-4zM420 334h12v4h-12zM356 338h4v4h-4zM424 338h4v4h-4zM328 342h4v4h-4zM424 342h4v4h-4zM416 346h16v4h-16zM404 350h4v4h-4zM284 354h8v4h-8zM260 358h4v4h-4zM308 358h4v4h-4zM324 362h4v4h-4zM272 366h4v4h-4zM304 386h4v4h-4zM408 386h4v4h-4zM324 402h4v4h-4zM324 422h4v4h-4zM364 422h4v4h-4zM320 434h4v4h-4zM316 442h4v4h-4zM368 446h4v4h-4zM368 450h4v4h-4z"/><path fill="#aba786" d="M320 98h4v4h-4zM368 98h4v4h-4zM308 102h4v4h-4zM396 110h4v4h-4zM276 126h4v4h-4zM272 130h4v4h-4zM416 130h4v4h-4zM268 134h4v4h-4zM420 138h4v4h-4zM264 142h4v4h-4zM424 150h4v4h-4zM424 154h4v4h-4zM424 158h4v4h-4zM424 162h4v4h-4zM424 166h4v4h-4zM264 170h4v4h-4zM264 174h4v4h-4zM420 174h4v4h-4zM264 178h4v4h-4zM420 178h4v4h-4zM268 182h4v4h-4zM268 186h4v4h-4zM416 186h4v4h-4zM412 190h4v4h-4zM272 194h4v4h-4zM408 198h4v4h-4zM276 202h4v4h-4zM404 202h4v4h-4zM280 206h4v4h-4zM400 206h4v4h-4zM280 210h4v4h-4zM396 210h4v4h-4zM284 214h4v4h-4zM396 214h4v4h-4zM288 218h4v4h-4zM392 218h4v4h-4zM292 222h4v4h-4zM388 222h4v4h-4zM296 226h4v4h-4zM388 226h4v4h-4zM300 230h4v4h-4zM384 230h4v4h-4zM304 234h4v4h-4zM384 234h4v4h-4zM304 238h8v4h-8zM380 238h4v4h-4zM308 242h8v4h-8zM372 242h12v4h-12zM312 246h8v4h-8zM364 246h12v4h-12zM316 250h8v4h-8zM356 250h12v4h-12zM324 254h4v4h-4zM352 254h8v4h-8zM328 258h20v4h-20zM376 298h4v4h-4zM364 302h16v4h-16zM356 306h16v4h-16zM360 310h4v4h-4zM420 362h8v4h-8zM296 366h4v4h-4zM412 366h8v4h-8zM304 370h4v4h-4zM376 370h4v4h-4zM308 374h4v4h-4zM372 378h4v4h-4zM280 382h4v4h-4zM288 382h4v4h-4zM340 394h4v4h-4zM340 398h4v4h-4z"/><path fill="#aeaa89" d="M324 98h4v4h-4zM360 98h8v4h-8zM376 102h4v4h-4zM300 106h4v4h-4zM388 106h4v4h-4zM400 114h4v4h-4zM404 118h4v4h-4zM408 122h4v4h-4zM280 126h4v4h-4zM412 126h4v4h-4zM276 130h4v4h-4zM272 134h4v4h-4zM416 134h4v4h-4zM268 138h4v4h-4zM420 142h4v4h-4zM264 146h4v4h-4zM420 146h4v4h-4zM264 150h4v4h-4zM420 150h4v4h-4zM264 154h4v4h-4zM420 154h4v4h-4zM264 158h4v4h-4zM420 158h4v4h-4zM264 162h4v4h-4zM420 162h4v4h-4zM264 166h4v4h-4zM420 166h4v4h-4zM420 170h4v4h-4zM268 174h4v4h-4zM268 178h4v4h-4zM416 178h4v4h-4zM416 182h4v4h-4zM272 186h4v4h-4zM412 186h4v4h-4zM272 190h4v4h-4zM276 194h4v4h-4zM408 194h4v4h-4zM276 198h4v4h-4zM404 198h4v4h-4zM280 202h4v4h-4zM400 202h4v4h-4zM284 210h4v4h-4zM288 214h4v4h-4zM392 214h4v4h-4zM292 218h4v4h-4zM388 218h4v4h-4zM296 222h4v4h-4zM300 226h4v4h-4zM384 226h4v4h-4zM304 230h4v4h-4zM380 230h4v4h-4zM308 234h4v4h-4zM376 234h8v4h-8zM312 238h4v4h-4zM372 238h8v4h-8zM316 242h4v4h-4zM360 242h12v4h-12zM320 246h4v4h-4zM356 246h8v4h-8zM324 250h8v4h-8zM348 250h8v4h-8zM328 254h24v4h-24zM284 366h4v4h-4zM392 366h4v4h-4zM408 366h4v4h-4zM420 366h4v4h-4zM380 370h4v4h-4zM304 374h4v4h-4zM372 374h4v4h-4zM416 374h4v4h-4zM296 378h4v4h-4zM284 382h4v4h-4z"/><path fill="#b1ad8b" d="M328 98h12v4h-12zM352 98h8v4h-8zM312 102h4v4h-4zM372 102h4v4h-4zM304 106h4v4h-4zM384 106h4v4h-4zM296 110h4v4h-4zM292 114h4v4h-4zM288 118h4v4h-4zM284 122h4v4h-4zM408 126h4v4h-4zM412 130h4v4h-4zM416 138h4v4h-4zM268 142h4v4h-4zM268 162h4v4h-4zM416 162h4v4h-4zM268 166h4v4h-4zM416 166h4v4h-4zM268 170h4v4h-4zM416 170h4v4h-4zM416 174h4v4h-4zM272 178h4v4h-4zM412 178h4v4h-4zM272 182h4v4h-4zM412 182h4v4h-4zM408 186h4v4h-4zM276 190h4v4h-4zM408 190h4v4h-4zM404 194h4v4h-4zM280 198h4v4h-4zM400 198h4v4h-4zM284 202h4v4h-4zM284 206h4v4h-4zM396 206h4v4h-4zM288 210h4v4h-4zM392 210h4v4h-4zM292 214h4v4h-4zM388 214h4v4h-4zM296 218h8v4h-8zM384 218h4v4h-4zM300 222h8v4h-8zM380 222h8v4h-8zM304 226h8v4h-8zM380 226h4v4h-4zM308 230h4v4h-4zM376 230h4v4h-4zM312 234h4v4h-4zM368 234h8v4h-8zM316 238h4v4h-4zM360 238h12v4h-12zM320 242h8v4h-8zM352 242h8v4h-8zM324 246h8v4h-8zM344 246h12v4h-12zM332 250h16v4h-16zM288 366h8v4h-8zM396 366h4v4h-4zM404 366h4v4h-4zM300 370h4v4h-4zM416 370h4v4h-4zM300 374h4v4h-4zM376 378h4v4h-4zM412 378h4v4h-4z"/><path fill="#b4b08d" d="M340 98h12v4h-12zM316 102h4v4h-4zM368 102h4v4h-4zM380 106h4v4h-4zM392 110h4v4h-4zM396 114h4v4h-4zM400 118h4v4h-4zM404 122h4v4h-4zM284 126h4v4h-4zM280 130h4v4h-4zM276 134h4v4h-4zM412 134h4v4h-4zM272 138h4v4h-4zM272 142h4v4h-4zM416 142h4v4h-4zM268 146h4v4h-4zM416 146h4v4h-4zM268 150h4v4h-4zM416 150h4v4h-4zM268 154h4v4h-4zM416 154h4v4h-4zM268 158h4v4h-4zM416 158h4v4h-4zM272 166h4v4h-4zM412 166h4v4h-4zM272 170h4v4h-4zM412 170h4v4h-4zM272 174h4v4h-4zM412 174h4v4h-4zM276 178h4v4h-4zM408 178h4v4h-4zM276 182h4v4h-4zM408 182h4v4h-4zM276 186h4v4h-4zM404 186h4v4h-4zM280 190h4v4h-4zM404 190h4v4h-4zM280 194h4v4h-4zM400 194h4v4h-4zM284 198h4v4h-4zM396 198h4v4h-4zM288 202h4v4h-4zM396 202h4v4h-4zM288 206h4v4h-4zM392 206h4v4h-4zM292 210h4v4h-4zM388 210h4v4h-4zM296 214h8v4h-8zM384 214h4v4h-4zM304 218h4v4h-4zM380 218h4v4h-4zM308 222h4v4h-4zM376 222h4v4h-4zM312 226h4v4h-4zM372 226h8v4h-8zM312 230h8v4h-8zM368 230h8v4h-8zM316 234h8v4h-8zM360 234h8v4h-8zM320 238h8v4h-8zM352 238h8v4h-8zM328 242h24v4h-24zM332 246h12v4h-12zM400 366h4v4h-4zM280 370h4v4h-4zM384 370h4v4h-4zM276 374h4v4h-4zM376 374h4v4h-4zM276 378h4v4h-4z"/><path fill="#7e7b63" d="M280 102h4v4h-4zM268 110h4v4h-4zM252 126h4v4h-4zM248 134h4v4h-4zM244 142h4v4h-4zM448 146h4v4h-4zM240 150h4v4h-4zM448 150h4v4h-4zM448 154h4v4h-4zM236 158h4v4h-4zM448 158h4v4h-4zM448 170h4v4h-4zM448 178h4v4h-4zM236 182h4v4h-4zM448 182h4v4h-4zM448 186h4v4h-4zM240 190h4v4h-4zM448 190h4v4h-4zM244 198h4v4h-4zM248 206h4v4h-4zM440 206h4v4h-4zM252 210h4v4h-4zM436 210h4v4h-4zM256 218h4v4h-4zM260 226h4v4h-4zM260 230h4v4h-4zM260 234h4v4h-4zM260 238h4v4h-4zM424 238h4v4h-4zM260 242h4v4h-4zM260 246h4v4h-4zM428 246h4v4h-4zM264 250h4v4h-4zM428 250h4v4h-4zM432 258h4v4h-4zM272 262h4v4h-4zM432 262h4v4h-4zM272 270h4v4h-4zM432 286h4v4h-4zM428 294h4v4h-4zM424 298h4v4h-4zM256 302h4v4h-4zM424 302h4v4h-4zM424 306h4v4h-4zM272 310h4v4h-4zM428 310h4v4h-4zM280 314h4v4h-4zM432 314h4v4h-4zM248 318h4v4h-4zM436 318h4v4h-4zM388 322h24v4h-24zM436 322h4v4h-4zM296 326h4v4h-4zM376 326h4v4h-4zM412 326h4v4h-4zM316 330h4v4h-4zM368 330h4v4h-4zM416 330h4v4h-4zM324 334h4v4h-4zM360 334h4v4h-4zM420 338h4v4h-4zM428 338h4v4h-4zM356 342h4v4h-4zM416 342h8v4h-8zM428 342h4v4h-4zM412 346h4v4h-4zM260 354h4v4h-4zM292 354h4v4h-4zM396 354h4v4h-4zM312 358h4v4h-4zM328 358h4v4h-4zM356 358h8v4h-8zM388 358h4v4h-4zM264 370h4v4h-4zM272 386h4v4h-4zM316 390h4v4h-4zM320 394h4v4h-4zM324 406h4v4h-4zM356 406h4v4h-4zM324 410h4v4h-4zM360 410h4v4h-4zM324 414h4v4h-4zM324 418h4v4h-4zM364 418h4v4h-4zM320 430h4v4h-4zM368 434h4v4h-4zM316 438h4v4h-4zM316 446h4v4h-4zM316 450h4v4h-4z"/><path fill="#b7b390" d="M320 102h8v4h-8zM364 102h4v4h-4zM308 106h4v4h-4zM300 110h4v4h-4zM292 118h4v4h-4zM288 122h4v4h-4zM404 126h4v4h-4zM408 130h4v4h-4zM280 134h4v4h-4zM408 134h4v4h-4zM276 138h4v4h-4zM412 138h4v4h-4zM412 142h4v4h-4zM272 146h4v4h-4zM412 146h4v4h-4zM272 150h4v4h-4zM412 150h4v4h-4zM272 154h4v4h-4zM412 154h4v4h-4zM272 158h4v4h-4zM412 158h4v4h-4zM272 162h4v4h-4zM412 162h4v4h-4zM276 166h4v4h-4zM408 166h4v4h-4zM276 170h4v4h-4zM408 170h4v4h-4zM276 174h4v4h-4zM408 174h4v4h-4zM280 178h4v4h-4zM404 178h4v4h-4zM280 182h4v4h-4zM404 182h4v4h-4zM280 186h4v4h-4zM400 186h4v4h-4zM284 190h4v4h-4zM400 190h4v4h-4zM284 194h4v4h-4zM396 194h4v4h-4zM288 198h4v4h-4zM392 198h4v4h-4zM292 202h4v4h-4zM392 202h4v4h-4zM292 206h8v4h-8zM388 206h4v4h-4zM296 210h8v4h-8zM384 210h4v4h-4zM304 214h4v4h-4zM380 214h4v4h-4zM308 218h4v4h-4zM376 218h4v4h-4zM312 222h4v4h-4zM372 222h4v4h-4zM316 226h4v4h-4zM364 226h8v4h-8zM320 230h4v4h-4zM360 230h8v4h-8zM324 234h8v4h-8zM352 234h8v4h-8zM328 238h24v4h-24zM296 370h4v4h-4zM412 370h4v4h-4zM296 374h4v4h-4zM292 378h4v4h-4zM380 378h4v4h-4z"/><path fill="#bab692" d="M328 102h12v4h-12zM352 102h12v4h-12zM312 106h4v4h-4zM376 106h4v4h-4zM388 110h4v4h-4zM296 114h4v4h-4zM396 118h4v4h-4zM400 122h4v4h-4zM288 126h4v4h-4zM284 130h4v4h-4zM404 130h4v4h-4zM280 138h4v4h-4zM408 138h4v4h-4zM276 142h4v4h-4zM408 142h4v4h-4zM276 146h4v4h-4zM408 146h4v4h-4zM276 150h4v4h-4zM408 150h4v4h-4zM276 154h4v4h-4zM408 154h4v4h-4zM276 158h4v4h-4zM408 158h4v4h-4zM276 162h4v4h-4zM408 162h4v4h-4zM280 166h4v4h-4zM404 166h4v4h-4zM280 170h4v4h-4zM404 170h4v4h-4zM280 174h4v4h-4zM404 174h4v4h-4zM400 178h4v4h-4zM284 182h4v4h-4zM400 182h4v4h-4zM284 186h4v4h-4zM396 186h4v4h-4zM288 190h4v4h-4zM396 190h4v4h-4zM288 194h4v4h-4zM392 194h4v4h-4zM292 198h4v4h-4zM388 198h4v4h-4zM296 202h4v4h-4zM384 202h8v4h-8zM300 206h4v4h-4zM380 206h8v4h-8zM304 210h4v4h-4zM380 210h4v4h-4zM308 214h4v4h-4zM372 214h8v4h-8zM312 218h4v4h-4zM368 218h8v4h-8zM316 222h4v4h-4zM364 222h8v4h-8zM320 226h8v4h-8zM360 226h4v4h-4zM324 230h8v4h-8zM352 230h8v4h-8zM332 234h20v4h-20zM388 370h4v4h-4zM408 370h4v4h-4zM380 374h4v4h-4zM412 374h4v4h-4zM384 378h4v4h-4zM408 378h4v4h-4z"/><path fill="#bdb994" d="M340 102h12v4h-12zM316 106h4v4h-4zM368 106h8v4h-8zM304 110h4v4h-4zM384 110h4v4h-4zM392 114h4v4h-4zM296 118h4v4h-4zM292 122h4v4h-4zM400 126h4v4h-4zM288 130h4v4h-4zM284 134h4v4h-4zM404 134h4v4h-4zM284 138h4v4h-4zM404 138h4v4h-4zM280 142h4v4h-4zM404 142h4v4h-4zM280 146h4v4h-4zM280 150h4v4h-4zM404 150h4v4h-4zM280 154h4v4h-4zM404 154h4v4h-4zM280 158h4v4h-4zM404 158h4v4h-4zM280 162h4v4h-4zM404 162h4v4h-4zM284 166h4v4h-4zM400 166h4v4h-4zM284 170h4v4h-4zM400 170h4v4h-4zM284 174h4v4h-4zM396 174h8v4h-8zM284 178h8v4h-8zM396 178h4v4h-4zM288 182h4v4h-4zM396 182h4v4h-4zM288 186h4v4h-4zM392 186h4v4h-4zM292 190h4v4h-4zM392 190h4v4h-4zM292 194h4v4h-4zM388 194h4v4h-4zM296 198h4v4h-4zM384 198h4v4h-4zM300 202h4v4h-4zM380 202h4v4h-4zM304 206h4v4h-4zM376 206h4v4h-4zM308 210h4v4h-4zM372 210h8v4h-8zM312 214h4v4h-4zM368 214h4v4h-4zM316 218h8v4h-8zM364 218h4v4h-4zM320 222h8v4h-8zM356 222h8v4h-8zM328 226h8v4h-8zM348 226h12v4h-12zM332 230h20v4h-20zM284 370h4v4h-4zM292 370h4v4h-4zM384 374h4v4h-4zM388 378h4v4h-4zM404 378h4v4h-4z"/><path fill="#c0bc97" d="M320 106h8v4h-8zM360 106h8v4h-8zM308 110h4v4h-4zM380 110h4v4h-4zM300 114h4v4h-4zM388 114h4v4h-4zM392 118h4v4h-4zM296 122h4v4h-4zM396 122h4v4h-4zM292 126h4v4h-4zM400 130h4v4h-4zM288 134h4v4h-4zM400 134h4v4h-4zM400 138h4v4h-4zM284 142h4v4h-4zM284 146h4v4h-4zM404 146h4v4h-4zM284 150h4v4h-4zM400 150h4v4h-4zM284 154h4v4h-4zM400 154h4v4h-4zM284 158h4v4h-4zM400 158h4v4h-4zM284 162h4v4h-4zM396 162h8v4h-8zM288 166h4v4h-4zM396 166h4v4h-4zM288 170h4v4h-4zM396 170h4v4h-4zM288 174h4v4h-4zM392 174h4v4h-4zM292 178h4v4h-4zM392 178h4v4h-4zM292 182h4v4h-4zM388 182h8v4h-8zM292 186h8v4h-8zM388 186h4v4h-4zM296 190h4v4h-4zM384 190h8v4h-8zM296 194h8v4h-8zM380 194h8v4h-8zM300 198h8v4h-8zM380 198h4v4h-4zM304 202h8v4h-8zM376 202h4v4h-4zM308 206h8v4h-8zM368 206h8v4h-8zM312 210h8v4h-8zM364 210h8v4h-8zM316 214h8v4h-8zM360 214h8v4h-8zM324 218h8v4h-8zM356 218h8v4h-8zM328 222h28v4h-28zM336 226h12v4h-12zM288 370h4v4h-4zM392 370h16v4h-16zM280 374h4v4h-4zM292 374h4v4h-4zM280 378h4v4h-4zM288 378h4v4h-4zM400 378h4v4h-4z"/><path fill="#c3bf99" d="M328 106h32v4h-32zM312 110h4v4h-4zM372 110h8v4h-8zM304 114h4v4h-4zM300 118h4v4h-4zM296 126h4v4h-4zM396 126h4v4h-4zM292 130h4v4h-4zM396 130h4v4h-4zM292 134h4v4h-4zM288 138h8v4h-8zM288 142h4v4h-4zM400 142h4v4h-4zM288 146h4v4h-4zM400 146h4v4h-4zM288 150h4v4h-4zM396 150h4v4h-4zM288 154h4v4h-4zM396 154h4v4h-4zM288 158h4v4h-4zM396 158h4v4h-4zM288 162h8v4h-8zM392 162h4v4h-4zM292 166h4v4h-4zM392 166h4v4h-4zM292 170h4v4h-4zM388 170h8v4h-8zM292 174h8v4h-8zM388 174h4v4h-4zM296 178h4v4h-4zM384 178h8v4h-8zM296 182h8v4h-8zM384 182h4v4h-4zM300 186h4v4h-4zM380 186h8v4h-8zM300 190h8v4h-8zM380 190h4v4h-4zM304 194h4v4h-4zM376 194h4v4h-4zM308 198h4v4h-4zM372 198h8v4h-8zM312 202h4v4h-4zM368 202h8v4h-8zM316 206h4v4h-4zM364 206h4v4h-4zM320 210h4v4h-4zM356 210h8v4h-8zM324 214h8v4h-8zM352 214h8v4h-8zM332 218h24v4h-24zM388 374h4v4h-4zM408 374h4v4h-4zM284 378h4v4h-4zM392 378h8v4h-8z"/><path fill="#c6c19b" d="M316 110h8v4h-8zM364 110h8v4h-8zM308 114h4v4h-4zM380 114h8v4h-8zM304 118h4v4h-4zM388 118h4v4h-4zM300 122h4v4h-4zM392 122h4v4h-4zM392 126h4v4h-4zM296 130h4v4h-4zM296 134h4v4h-4zM396 134h4v4h-4zM296 138h4v4h-4zM396 138h4v4h-4zM292 142h8v4h-8zM396 142h4v4h-4zM292 146h4v4h-4zM392 146h8v4h-8zM292 150h4v4h-4zM392 150h4v4h-4zM292 154h8v4h-8zM392 154h4v4h-4zM292 158h8v4h-8zM388 158h8v4h-8zM296 162h4v4h-4zM388 162h4v4h-4zM296 166h8v4h-8zM384 166h8v4h-8zM296 170h8v4h-8zM384 170h4v4h-4zM300 174h4v4h-4zM380 174h8v4h-8zM300 178h8v4h-8zM380 178h4v4h-4zM304 182h4v4h-4zM376 182h8v4h-8zM304 186h8v4h-8zM376 186h4v4h-4zM308 190h4v4h-4zM372 190h8v4h-8zM308 194h8v4h-8zM368 194h8v4h-8zM312 198h8v4h-8zM364 198h8v4h-8zM316 202h8v4h-8zM360 202h8v4h-8zM320 206h8v4h-8zM352 206h12v4h-12zM324 210h12v4h-12zM348 210h8v4h-8zM332 214h20v4h-20zM284 374h8v4h-8zM400 374h8v4h-8z"/><path fill="#c9c49e" d="M324 110h40v4h-40zM312 114h8v4h-8zM376 114h4v4h-4zM308 118h4v4h-4zM384 118h4v4h-4zM304 122h4v4h-4zM388 122h4v4h-4zM300 126h4v4h-4zM300 130h4v4h-4zM392 130h4v4h-4zM300 134h4v4h-4zM392 134h4v4h-4zM300 138h4v4h-4zM392 138h4v4h-4zM300 142h4v4h-4zM388 142h8v4h-8zM296 146h8v4h-8zM388 146h4v4h-4zM296 150h8v4h-8zM384 150h8v4h-8zM300 154h8v4h-8zM384 154h8v4h-8zM300 158h8v4h-8zM380 158h8v4h-8zM300 162h8v4h-8zM380 162h8v4h-8zM304 166h8v4h-8zM380 166h4v4h-4zM304 170h8v4h-8zM376 170h8v4h-8zM304 174h8v4h-8zM376 174h4v4h-4zM308 178h8v4h-8zM372 178h8v4h-8zM308 182h8v4h-8zM368 182h8v4h-8zM312 186h4v4h-4zM364 186h12v4h-12zM312 190h8v4h-8zM360 190h12v4h-12zM316 194h8v4h-8zM356 194h12v4h-12zM320 198h8v4h-8zM352 198h12v4h-12zM324 202h8v4h-8zM348 202h12v4h-12zM328 206h24v4h-24zM336 210h12v4h-12zM392 374h8v4h-8z"/><path fill="#ccc7a0" d="M320 114h8v4h-8zM360 114h16v4h-16zM312 118h4v4h-4zM380 118h4v4h-4zM308 122h4v4h-4zM384 122h4v4h-4zM304 126h4v4h-4zM388 126h4v4h-4zM304 130h4v4h-4zM388 130h4v4h-4zM304 134h4v4h-4zM388 134h4v4h-4zM304 138h8v4h-8zM384 138h8v4h-8zM304 142h8v4h-8zM384 142h4v4h-4zM304 146h8v4h-8zM380 146h8v4h-8zM304 150h12v4h-12zM376 150h8v4h-8zM308 154h8v4h-8zM376 154h8v4h-8zM308 158h8v4h-8zM372 158h8v4h-8zM308 162h12v4h-12zM372 162h8v4h-8zM312 166h8v4h-8zM368 166h12v4h-12zM312 170h12v4h-12zM368 170h8v4h-8zM312 174h12v4h-12zM364 174h12v4h-12zM316 178h8v4h-8zM360 178h12v4h-12zM316 182h12v4h-12zM356 182h12v4h-12zM316 186h12v4h-12zM352 186h12v4h-12zM320 190h12v4h-12zM352 190h8v4h-8zM324 194h12v4h-12zM348 194h8v4h-8zM328 198h24v4h-24zM332 202h16v4h-16z"/><path fill="#cfcaa2" d="M328 114h32v4h-32zM316 118h12v4h-12zM364 118h16v4h-16zM312 122h8v4h-8zM376 122h8v4h-8zM308 126h8v4h-8zM380 126h8v4h-8zM308 130h8v4h-8zM380 130h8v4h-8zM308 134h8v4h-8zM376 134h12v4h-12zM312 138h8v4h-8zM372 138h12v4h-12zM312 142h12v4h-12zM368 142h16v4h-16zM312 146h12v4h-12zM364 146h16v4h-16zM316 150h12v4h-12zM364 150h12v4h-12zM316 154h12v4h-12zM360 154h16v4h-16zM316 158h16v4h-16zM356 158h16v4h-16zM320 162h20v4h-20zM352 162h20v4h-20zM320 166h48v4h-48zM324 170h44v4h-44zM324 174h40v4h-40zM324 178h36v4h-36zM328 182h28v4h-28zM328 186h24v4h-24zM332 190h20v4h-20zM336 194h12v4h-12z"/><path fill="#d2cda5" d="M328 118h36v4h-36zM320 122h12v4h-12zM356 122h20v4h-20zM316 126h12v4h-12zM364 126h16v4h-16zM316 130h12v4h-12zM364 130h16v4h-16zM316 134h12v4h-12zM360 134h16v4h-16zM320 138h12v4h-12zM356 138h16v4h-16zM324 142h44v4h-44zM324 146h40v4h-40zM328 150h36v4h-36zM328 154h32v4h-32zM332 158h24v4h-24zM340 162h12v4h-12z"/><path fill="#d5d0a7" d="M332 122h24v4h-24zM328 126h36v4h-36zM328 130h36v4h-36zM328 134h32v4h-32zM332 138h24v4h-24z"/><path fill="#78755e" d="M248 130h4v4h-4zM244 138h4v4h-4zM240 146h4v4h-4zM232 166h4v4h-4zM232 170h4v4h-4zM232 174h4v4h-4zM232 178h4v4h-4zM236 190h4v4h-4zM240 198h4v4h-4zM448 198h4v4h-4zM444 206h4v4h-4zM248 210h4v4h-4zM440 210h4v4h-4zM436 214h4v4h-4zM252 218h4v4h-4zM256 226h4v4h-4zM424 226h4v4h-4zM424 230h4v4h-4zM256 234h4v4h-4zM256 238h4v4h-4zM428 238h4v4h-4zM256 242h4v4h-4zM256 246h4v4h-4zM432 246h4v4h-4zM268 262h4v4h-4zM436 262h4v4h-4zM436 266h4v4h-4zM268 274h4v4h-4zM252 278h4v4h-4zM260 278h4v4h-4zM436 286h4v4h-4zM428 298h4v4h-4zM252 306h12v4h-12zM428 306h4v4h-4zM268 310h4v4h-4zM432 310h4v4h-4zM272 314h4v4h-4zM436 314h4v4h-4zM276 318h4v4h-4zM280 322h4v4h-4zM288 326h4v4h-4zM380 326h4v4h-4zM400 326h8v4h-8zM304 330h8v4h-8zM372 330h4v4h-4zM408 330h4v4h-4zM320 334h4v4h-4zM364 334h4v4h-4zM412 334h4v4h-4zM436 334h4v4h-4zM324 338h4v4h-4zM360 338h4v4h-4zM412 338h4v4h-4zM432 338h4v4h-4zM256 342h8v4h-8zM408 342h4v4h-4zM432 342h4v4h-4zM264 346h4v4h-4zM404 346h4v4h-4zM432 346h4v4h-4zM264 350h4v4h-4zM256 354h4v4h-4zM264 354h4v4h-4zM296 354h4v4h-4zM360 354h4v4h-4zM264 358h4v4h-4zM372 358h8v4h-8zM384 358h4v4h-4zM268 366h4v4h-4zM264 378h4v4h-4zM360 390h4v4h-4zM316 394h4v4h-4zM320 402h4v4h-4zM356 402h4v4h-4zM320 406h4v4h-4zM320 422h4v4h-4zM368 426h4v4h-4zM316 434h4v4h-4zM372 438h4v4h-4zM372 450h4v4h-4z"/><path fill="#75725c" d="M244 134h4v4h-4zM240 142h4v4h-4zM236 150h4v4h-4zM452 150h4v4h-4zM452 154h4v4h-4zM452 158h4v4h-4zM232 162h4v4h-4zM452 162h4v4h-4zM452 166h4v4h-4zM452 170h4v4h-4zM452 174h4v4h-4zM452 178h4v4h-4zM232 182h4v4h-4zM452 182h4v4h-4zM452 186h4v4h-4zM452 190h4v4h-4zM236 194h4v4h-4zM448 202h4v4h-4zM244 206h4v4h-4zM248 214h4v4h-4zM432 218h4v4h-4zM252 222h4v4h-4zM428 222h4v4h-4zM256 230h4v4h-4zM428 234h4v4h-4zM432 242h4v4h-4zM256 250h4v4h-4zM436 250h4v4h-4zM260 254h4v4h-4zM436 254h4v4h-4zM264 258h4v4h-4zM436 258h4v4h-4zM440 270h4v4h-4zM440 274h4v4h-4zM256 278h4v4h-4zM440 278h4v4h-4zM440 282h4v4h-4zM436 290h4v4h-4zM432 294h4v4h-4zM248 302h4v4h-4zM428 302h4v4h-4zM432 306h4v4h-4zM248 310h12v4h-12zM264 310h4v4h-4zM252 314h4v4h-4zM268 314h4v4h-4zM252 318h4v4h-4zM248 322h8v4h-8zM284 326h4v4h-4zM384 326h16v4h-16zM292 330h12v4h-12zM404 330h4v4h-4zM408 334h4v4h-4zM256 338h12v4h-12zM408 338h4v4h-4zM264 342h4v4h-4zM324 342h4v4h-4zM360 342h4v4h-4zM404 342h4v4h-4zM400 346h4v4h-4zM280 350h12v4h-12zM432 350h4v4h-4zM276 354h4v4h-4zM300 354h4v4h-4zM324 354h4v4h-4zM380 358h4v4h-4zM428 370h4v4h-4zM276 390h4v4h-4zM288 390h4v4h-4zM308 390h4v4h-4zM364 390h4v4h-4zM356 398h4v4h-4zM360 406h4v4h-4zM320 410h4v4h-4zM364 410h4v4h-4zM320 414h4v4h-4zM320 418h4v4h-4zM368 422h4v4h-4zM372 434h4v4h-4zM312 442h4v4h-4zM312 446h4v4h-4zM312 450h4v4h-4z"/><path fill="#6f6c57" d="M240 138h4v4h-4zM232 154h4v4h-4zM228 174h4v4h-4zM232 190h4v4h-4zM236 198h4v4h-4zM452 198h4v4h-4zM240 206h4v4h-4zM244 214h4v4h-4zM248 222h4v4h-4zM432 226h4v4h-4zM432 230h4v4h-4zM432 234h4v4h-4zM436 238h4v4h-4zM252 250h4v4h-4zM440 250h4v4h-4zM440 254h4v4h-4zM260 258h4v4h-4zM440 258h4v4h-4zM264 262h4v4h-4zM264 274h4v4h-4zM244 294h4v4h-4zM436 294h4v4h-4zM244 314h4v4h-4zM256 314h12v4h-12zM244 318h4v4h-4zM268 318h4v4h-4zM256 322h4v4h-4zM268 322h4v4h-4zM440 322h4v4h-4zM256 326h20v4h-20zM252 330h4v4h-4zM264 330h20v4h-20zM380 330h4v4h-4zM396 330h4v4h-4zM252 334h4v4h-4zM268 334h4v4h-4zM312 334h4v4h-4zM400 334h4v4h-4zM252 338h4v4h-4zM268 338h8v4h-8zM320 338h4v4h-4zM252 342h4v4h-4zM272 342h4v4h-4zM364 342h4v4h-4zM400 342h4v4h-4zM272 346h16v4h-16zM252 350h4v4h-4zM272 350h4v4h-4zM292 350h4v4h-4zM320 350h4v4h-4zM364 350h4v4h-4zM272 354h4v4h-4zM368 354h4v4h-4zM268 358h8v4h-8zM268 362h4v4h-4zM260 370h4v4h-4zM416 386h4v4h-4zM300 390h4v4h-4zM376 390h4v4h-4zM400 390h4v4h-4zM360 394h4v4h-4zM316 402h4v4h-4zM360 402h4v4h-4zM316 406h4v4h-4zM364 406h4v4h-4zM368 418h4v4h-4zM316 430h4v4h-4zM312 438h4v4h-4zM376 442h4v4h-4zM376 446h4v4h-4zM376 450h4v4h-4z"/><path fill="#6c6a55" d="M236 142h4v4h-4zM232 150h4v4h-4zM456 154h4v4h-4zM456 158h4v4h-4zM228 162h4v4h-4zM456 162h4v4h-4zM228 166h4v4h-4zM456 166h4v4h-4zM228 170h4v4h-4zM456 170h4v4h-4zM456 174h4v4h-4zM228 178h4v4h-4zM456 178h4v4h-4zM228 182h4v4h-4zM456 182h4v4h-4zM228 186h4v4h-4zM456 186h4v4h-4zM456 190h4v4h-4zM232 194h4v4h-4zM236 202h4v4h-4zM452 202h4v4h-4zM240 210h4v4h-4zM448 210h4v4h-4zM444 214h4v4h-4zM244 218h4v4h-4zM440 218h4v4h-4zM436 222h4v4h-4zM248 226h4v4h-4zM436 226h4v4h-4zM248 230h4v4h-4zM248 234h4v4h-4zM436 234h4v4h-4zM248 238h4v4h-4zM248 242h4v4h-4zM440 242h4v4h-4zM248 246h4v4h-4zM440 246h4v4h-4zM248 250h4v4h-4zM252 254h4v4h-4zM256 258h4v4h-4zM444 266h4v4h-4zM444 270h4v4h-4zM248 274h8v4h-8zM444 274h4v4h-4zM444 278h4v4h-4zM244 282h4v4h-4zM444 282h4v4h-4zM440 290h4v4h-4zM436 298h4v4h-4zM436 306h4v4h-4zM440 314h4v4h-4zM256 318h12v4h-12zM260 322h8v4h-8zM248 326h4v4h-4zM384 330h12v4h-12zM272 334h40v4h-40zM372 334h4v4h-4zM276 338h12v4h-12zM316 338h4v4h-4zM368 338h4v4h-4zM400 338h4v4h-4zM436 338h4v4h-4zM276 342h12v4h-12zM320 342h4v4h-4zM288 346h4v4h-4zM320 346h4v4h-4zM364 346h4v4h-4zM396 346h4v4h-4zM316 350h4v4h-4zM372 354h4v4h-4zM432 354h4v4h-4zM264 382h4v4h-4zM380 390h12v4h-12zM396 390h4v4h-4zM404 390h4v4h-4zM308 394h4v4h-4zM364 394h4v4h-4zM312 398h4v4h-4zM360 398h4v4h-4zM316 410h4v4h-4zM368 414h4v4h-4zM316 426h4v4h-4zM372 430h4v4h-4zM376 438h4v4h-4z"/><path fill="#7b7861" d="M448 142h4v4h-4zM236 154h4v4h-4zM236 186h4v4h-4zM240 194h4v4h-4zM448 194h4v4h-4zM244 202h4v4h-4zM444 202h4v4h-4zM252 214h4v4h-4zM432 214h4v4h-4zM428 218h4v4h-4zM256 222h4v4h-4zM424 222h4v4h-4zM424 234h4v4h-4zM428 242h4v4h-4zM260 250h4v4h-4zM432 250h4v4h-4zM264 254h4v4h-4zM432 254h4v4h-4zM268 258h4v4h-4zM272 266h4v4h-4zM436 270h4v4h-4zM436 274h4v4h-4zM264 278h4v4h-4zM436 278h4v4h-4zM248 282h4v4h-4zM436 282h4v4h-4zM432 290h4v4h-4zM248 298h4v4h-4zM252 302h4v4h-4zM264 306h4v4h-4zM248 314h4v4h-4zM276 314h4v4h-4zM280 318h4v4h-4zM284 322h4v4h-4zM292 326h4v4h-4zM408 326h4v4h-4zM436 326h4v4h-4zM312 330h4v4h-4zM412 330h4v4h-4zM436 330h4v4h-4zM416 334h4v4h-4zM432 334h4v4h-4zM416 338h4v4h-4zM412 342h4v4h-4zM256 346h8v4h-8zM328 346h4v4h-4zM356 346h4v4h-4zM408 346h4v4h-4zM256 350h8v4h-8zM328 350h4v4h-4zM356 350h4v4h-4zM400 350h4v4h-4zM280 354h4v4h-4zM328 354h4v4h-4zM356 354h4v4h-4zM276 358h4v4h-4zM316 358h12v4h-12zM364 358h8v4h-8zM264 362h4v4h-4zM260 366h8v4h-8zM264 374h4v4h-4zM420 382h4v4h-4zM412 386h4v4h-4zM280 390h8v4h-8zM312 390h4v4h-4zM356 394h4v4h-4zM320 398h4v4h-4zM364 414h4v4h-4zM320 426h4v4h-4zM368 430h4v4h-4zM372 442h4v4h-4zM372 446h4v4h-4z"/><path fill="#726f59" d="M236 146h4v4h-4zM232 158h4v4h-4zM232 186h4v4h-4zM452 194h4v4h-4zM240 202h4v4h-4zM448 206h4v4h-4zM244 210h4v4h-4zM444 210h4v4h-4zM440 214h4v4h-4zM248 218h4v4h-4zM436 218h4v4h-4zM432 222h4v4h-4zM252 226h4v4h-4zM428 226h4v4h-4zM252 230h4v4h-4zM428 230h4v4h-4zM252 234h4v4h-4zM252 238h4v4h-4zM432 238h4v4h-4zM252 242h4v4h-4zM436 242h4v4h-4zM252 246h4v4h-4zM436 246h4v4h-4zM256 254h4v4h-4zM440 262h4v4h-4zM268 266h4v4h-4zM440 266h4v4h-4zM268 270h4v4h-4zM248 278h4v4h-4zM244 286h4v4h-4zM440 286h4v4h-4zM244 290h4v4h-4zM432 298h4v4h-4zM432 302h4v4h-4zM248 306h4v4h-4zM260 310h4v4h-4zM436 310h4v4h-4zM272 318h4v4h-4zM440 318h4v4h-4zM272 322h8v4h-8zM252 326h4v4h-4zM276 326h8v4h-8zM256 330h8v4h-8zM284 330h8v4h-8zM376 330h4v4h-4zM400 330h4v4h-4zM256 334h12v4h-12zM316 334h4v4h-4zM368 334h4v4h-4zM404 334h4v4h-4zM364 338h4v4h-4zM404 338h4v4h-4zM268 342h4v4h-4zM252 346h4v4h-4zM268 346h4v4h-4zM324 346h4v4h-4zM360 346h4v4h-4zM268 350h4v4h-4zM276 350h4v4h-4zM324 350h4v4h-4zM360 350h4v4h-4zM396 350h4v4h-4zM268 354h4v4h-4zM304 354h20v4h-20zM364 354h4v4h-4zM392 354h4v4h-4zM256 358h4v4h-4zM256 362h4v4h-4zM272 362h4v4h-4zM424 378h4v4h-4zM268 386h4v4h-4zM292 390h8v4h-8zM304 390h4v4h-4zM368 390h8v4h-8zM312 394h4v4h-4zM316 398h4v4h-4z"/><path fill="#666450" d="M228 154h4v4h-4zM228 194h4v4h-4zM456 198h4v4h-4zM232 202h4v4h-4zM456 202h4v4h-4zM236 210h4v4h-4zM452 210h4v4h-4zM240 218h4v4h-4zM444 222h4v4h-4zM244 226h4v4h-4zM440 226h4v4h-4zM244 230h4v4h-4zM440 230h4v4h-4zM244 234h4v4h-4zM440 234h4v4h-4zM244 238h4v4h-4zM244 242h4v4h-4zM444 242h4v4h-4zM244 246h4v4h-4zM444 246h4v4h-4zM244 250h4v4h-4zM444 250h4v4h-4zM244 254h4v4h-4zM444 254h4v4h-4zM248 258h4v4h-4zM248 262h12v4h-12zM248 266h8v4h-8zM260 266h4v4h-4zM248 270h8v4h-8zM244 274h4v4h-4zM260 274h4v4h-4zM440 294h4v4h-4zM440 310h4v4h-4zM244 322h4v4h-4zM248 330h4v4h-4zM248 334h4v4h-4zM392 334h4v4h-4zM292 338h4v4h-4zM308 338h8v4h-8zM372 338h4v4h-4zM396 338h4v4h-4zM292 342h4v4h-4zM316 342h4v4h-4zM368 342h4v4h-4zM396 342h4v4h-4zM292 346h4v4h-4zM316 346h4v4h-4zM368 346h4v4h-4zM304 350h8v4h-8zM392 350h4v4h-4zM380 354h8v4h-8zM276 394h4v4h-4zM288 394h4v4h-4zM304 394h4v4h-4zM364 398h4v4h-4zM312 402h4v4h-4zM368 406h4v4h-4zM316 418h4v4h-4zM372 426h4v4h-4zM376 434h4v4h-4zM308 442h4v4h-4z"/><path fill="#696752" d="M228 158h4v4h-4zM228 190h4v4h-4zM456 194h4v4h-4zM232 198h4v4h-4zM236 206h4v4h-4zM452 206h4v4h-4zM240 214h4v4h-4zM448 214h4v4h-4zM444 218h4v4h-4zM244 222h4v4h-4zM440 222h4v4h-4zM436 230h4v4h-4zM440 238h4v4h-4zM248 254h4v4h-4zM252 258h4v4h-4zM444 258h4v4h-4zM260 262h4v4h-4zM444 262h4v4h-4zM264 266h4v4h-4zM264 270h4v4h-4zM256 274h4v4h-4zM244 278h4v4h-4zM444 286h4v4h-4zM244 298h4v4h-4zM244 302h4v4h-4zM436 302h4v4h-4zM244 306h4v4h-4zM244 310h4v4h-4zM440 326h4v4h-4zM376 334h4v4h-4zM396 334h4v4h-4zM288 338h4v4h-4zM288 342h4v4h-4zM296 350h4v4h-4zM312 350h4v4h-4zM368 350h4v4h-4zM376 354h4v4h-4zM388 354h4v4h-4zM272 390h4v4h-4zM392 390h4v4h-4zM408 390h4v4h-4zM280 394h8v4h-8zM368 394h4v4h-4zM364 402h4v4h-4zM368 410h4v4h-4zM316 414h4v4h-4zM316 422h4v4h-4zM312 434h4v4h-4zM308 446h4v4h-4zM308 450h4v4h-4z"/><path fill="#605e4b" d="M224 162h4v4h-4zM224 190h4v4h-4zM224 194h4v4h-4zM460 194h4v4h-4zM228 202h4v4h-4zM232 210h4v4h-4zM456 210h4v4h-4zM236 218h4v4h-4zM448 222h4v4h-4zM240 230h4v4h-4zM240 234h4v4h-4zM240 238h4v4h-4zM448 242h4v4h-4zM448 246h4v4h-4zM448 250h4v4h-4zM448 254h4v4h-4zM240 258h4v4h-4zM448 258h4v4h-4zM448 262h4v4h-4zM244 266h4v4h-4zM448 286h4v4h-4zM440 302h4v4h-4zM440 306h4v4h-4zM376 338h4v4h-4zM392 338h4v4h-4zM296 342h4v4h-4zM308 342h4v4h-4zM372 342h4v4h-4zM436 342h4v4h-4zM296 346h4v4h-4zM308 346h4v4h-4zM372 346h4v4h-4zM376 350h4v4h-4zM428 374h4v4h-4zM424 382h4v4h-4zM420 386h4v4h-4zM312 410h4v4h-4zM372 422h4v4h-4zM312 430h4v4h-4z"/><path fill="#63614e" d="M460 162h4v4h-4zM224 166h4v4h-4zM460 166h4v4h-4zM224 170h4v4h-4zM460 170h4v4h-4zM224 174h4v4h-4zM460 174h4v4h-4zM224 178h4v4h-4zM460 178h4v4h-4zM224 182h4v4h-4zM460 182h4v4h-4zM224 186h4v4h-4zM460 186h4v4h-4zM460 190h4v4h-4zM228 198h4v4h-4zM232 206h4v4h-4zM456 206h4v4h-4zM236 214h4v4h-4zM452 214h4v4h-4zM448 218h4v4h-4zM240 222h4v4h-4zM240 226h4v4h-4zM444 226h4v4h-4zM444 230h4v4h-4zM444 234h4v4h-4zM444 238h4v4h-4zM240 242h4v4h-4zM240 246h4v4h-4zM240 250h4v4h-4zM240 254h4v4h-4zM244 258h4v4h-4zM244 262h4v4h-4zM256 266h4v4h-4zM448 266h4v4h-4zM244 270h4v4h-4zM256 270h8v4h-8zM448 270h4v4h-4zM448 274h4v4h-4zM448 278h4v4h-4zM448 282h4v4h-4zM444 290h4v4h-4zM440 298h4v4h-4zM440 330h4v4h-4zM380 334h12v4h-12zM296 338h12v4h-12zM312 342h4v4h-4zM312 346h4v4h-4zM300 350h4v4h-4zM372 350h4v4h-4zM252 354h4v4h-4zM432 358h4v4h-4zM256 366h4v4h-4zM260 374h4v4h-4zM412 390h4v4h-4zM292 394h12v4h-12zM372 394h4v4h-4zM308 398h4v4h-4zM368 398h4v4h-4zM368 402h4v4h-4zM312 406h4v4h-4zM308 438h4v4h-4zM380 442h4v4h-4zM380 446h4v4h-4zM380 450h4v4h-4z"/><path fill="#5a5847" d="M220 170h4v4h-4zM464 170h4v4h-4zM220 174h4v4h-4zM464 174h4v4h-4zM220 178h4v4h-4zM464 178h4v4h-4zM220 182h4v4h-4zM464 182h4v4h-4zM220 186h4v4h-4zM464 186h4v4h-4zM220 190h4v4h-4zM224 202h4v4h-4zM224 206h4v4h-4zM460 206h4v4h-4zM228 210h4v4h-4zM228 214h4v4h-4zM456 214h4v4h-4zM232 218h4v4h-4zM232 222h4v4h-4zM452 222h4v4h-4zM236 230h4v4h-4zM236 234h4v4h-4zM236 262h4v4h-4zM452 262h4v4h-4zM452 266h4v4h-4zM240 270h4v4h-4zM452 270h4v4h-4zM240 274h4v4h-4zM452 274h4v4h-4zM240 278h4v4h-4zM452 278h4v4h-4zM240 282h4v4h-4zM240 286h4v4h-4zM240 290h4v4h-4zM448 290h4v4h-4zM380 338h12v4h-12zM376 342h4v4h-4zM376 346h4v4h-4zM380 350h12v4h-12zM432 362h4v4h-4zM416 390h4v4h-4zM380 394h8v4h-8zM396 394h4v4h-4zM408 394h4v4h-4zM288 398h16v4h-16zM308 406h4v4h-4zM372 410h4v4h-4zM312 414h4v4h-4zM308 434h4v4h-4zM304 442h4v4h-4zM384 450h4v4h-4z"/><path fill="#514f40" d="M216 178h4v4h-4zM468 178h4v4h-4zM216 182h4v4h-4zM468 182h4v4h-4zM216 186h4v4h-4zM468 186h4v4h-4zM216 190h4v4h-4zM216 194h4v4h-4zM216 198h4v4h-4zM464 206h4v4h-4zM220 210h4v4h-4zM464 210h4v4h-4zM220 214h4v4h-4zM224 218h4v4h-4zM460 218h4v4h-4zM224 222h4v4h-4zM460 222h4v4h-4zM228 226h4v4h-4zM228 230h4v4h-4zM456 230h4v4h-4zM228 234h4v4h-4zM456 234h4v4h-4zM228 238h4v4h-4zM456 238h4v4h-4zM228 242h4v4h-4zM456 250h4v4h-4zM456 254h4v4h-4zM228 258h4v4h-4zM456 258h4v4h-4zM456 262h4v4h-4zM456 266h4v4h-4zM236 270h4v4h-4zM448 294h4v4h-4zM444 302h4v4h-4zM444 306h4v4h-4zM444 310h4v4h-4zM240 318h4v4h-4zM444 322h4v4h-4zM244 330h4v4h-4zM248 346h4v4h-4zM384 346h4v4h-4zM432 366h4v4h-4zM400 398h12v4h-12zM284 402h16v4h-16zM304 406h4v4h-4zM308 430h4v4h-4zM380 430h4v4h-4zM384 438h4v4h-4zM300 450h4v4h-4z"/><path fill="#4b493b" d="M212 190h4v4h-4zM212 194h4v4h-4zM468 202h4v4h-4zM468 206h4v4h-4zM216 210h4v4h-4zM216 214h4v4h-4zM216 218h4v4h-4zM464 218h4v4h-4zM464 222h4v4h-4zM220 226h4v4h-4zM220 230h4v4h-4zM460 230h4v4h-4zM220 234h4v4h-4zM460 234h4v4h-4zM224 258h4v4h-4zM232 270h4v4h-4zM236 278h4v4h-4zM456 278h4v4h-4zM452 290h4v4h-4zM240 322h4v4h-4zM444 326h4v4h-4zM248 350h4v4h-4zM436 350h4v4h-4zM428 378h4v4h-4zM264 390h4v4h-4zM420 390h4v4h-4zM416 394h4v4h-4zM384 398h12v4h-12zM276 402h4v4h-4zM300 406h4v4h-4zM376 406h4v4h-4zM304 410h4v4h-4zM376 410h4v4h-4zM376 414h4v4h-4zM384 434h4v4h-4zM300 442h4v4h-4zM388 446h4v4h-4z"/><path fill="#575544" d="M464 190h4v4h-4zM220 194h4v4h-4zM464 194h4v4h-4zM220 198h4v4h-4zM224 210h4v4h-4zM460 210h4v4h-4zM228 218h4v4h-4zM456 218h4v4h-4zM232 226h4v4h-4zM452 226h4v4h-4zM232 230h4v4h-4zM452 230h4v4h-4zM232 234h4v4h-4zM452 234h4v4h-4zM232 238h4v4h-4zM452 238h4v4h-4zM232 242h4v4h-4zM452 242h4v4h-4zM232 246h4v4h-4zM452 246h4v4h-4zM232 250h4v4h-4zM452 250h4v4h-4zM232 254h4v4h-4zM452 254h4v4h-4zM232 258h4v4h-4zM452 258h4v4h-4zM452 282h4v4h-4zM240 294h4v4h-4zM444 298h4v4h-4zM444 318h4v4h-4zM248 342h4v4h-4zM380 342h4v4h-4zM388 342h4v4h-4zM260 378h4v4h-4zM388 394h8v4h-8zM412 394h4v4h-4zM276 398h4v4h-4zM304 402h4v4h-4zM372 402h4v4h-4zM372 406h4v4h-4zM312 418h4v4h-4zM312 426h4v4h-4zM380 434h4v4h-4zM384 442h4v4h-4zM384 446h4v4h-4z"/><path fill="#4e4c3d" d="M468 190h4v4h-4zM468 194h4v4h-4zM468 198h4v4h-4zM216 202h4v4h-4zM216 206h4v4h-4zM464 214h4v4h-4zM220 218h4v4h-4zM220 222h4v4h-4zM224 226h4v4h-4zM460 226h4v4h-4zM224 230h4v4h-4zM224 234h4v4h-4zM224 238h4v4h-4zM224 242h4v4h-4zM456 242h4v4h-4zM224 246h4v4h-4zM456 246h4v4h-4zM224 250h4v4h-4zM224 254h4v4h-4zM228 262h4v4h-4zM232 266h4v4h-4zM456 270h4v4h-4zM236 274h4v4h-4zM456 274h4v4h-4zM440 338h4v4h-4zM260 382h4v4h-4zM424 386h4v4h-4zM268 394h4v4h-4zM272 398h4v4h-4zM380 398h4v4h-4zM396 398h4v4h-4zM412 398h4v4h-4zM280 402h4v4h-4zM376 402h4v4h-4zM308 414h4v4h-4zM376 418h4v4h-4zM376 422h4v4h-4zM304 434h4v4h-4zM300 446h4v4h-4zM388 450h4v4h-4z"/><path fill="#454336" d="M472 190h4v4h-4zM472 194h4v4h-4zM472 198h4v4h-4zM212 210h4v4h-4zM212 214h4v4h-4zM212 218h4v4h-4zM468 218h4v4h-4zM212 222h4v4h-4zM468 222h4v4h-4zM216 234h4v4h-4zM464 234h4v4h-4zM216 238h4v4h-4zM216 242h4v4h-4zM220 258h4v4h-4zM460 266h4v4h-4zM460 270h4v4h-4zM232 274h4v4h-4zM236 286h4v4h-4zM456 286h4v4h-4zM244 334h4v4h-4zM432 370h4v4h-4zM396 402h16v4h-16zM284 406h8v4h-8zM300 410h4v4h-4zM304 414h4v4h-4zM308 422h4v4h-4zM304 430h4v4h-4zM384 430h4v4h-4zM388 438h4v4h-4zM296 450h4v4h-4z"/><path fill="#484639" d="M212 198h4v4h-4zM212 202h4v4h-4zM212 206h4v4h-4zM468 210h4v4h-4zM468 214h4v4h-4zM216 222h4v4h-4zM216 226h4v4h-4zM464 226h4v4h-4zM216 230h4v4h-4zM464 230h4v4h-4zM220 238h4v4h-4zM460 238h4v4h-4zM220 242h4v4h-4zM460 242h4v4h-4zM220 246h4v4h-4zM460 246h4v4h-4zM220 250h4v4h-4zM460 250h4v4h-4zM220 254h4v4h-4zM460 254h4v4h-4zM460 258h4v4h-4zM224 262h4v4h-4zM460 262h4v4h-4zM228 266h4v4h-4zM236 282h4v4h-4zM456 282h4v4h-4zM448 298h4v4h-4zM252 362h4v4h-4zM380 402h4v4h-4zM292 406h8v4h-8zM308 418h4v4h-4zM308 426h4v4h-4zM380 426h4v4h-4zM300 438h4v4h-4zM388 442h4v4h-4z"/><path fill="#5d5b49" d="M224 198h4v4h-4zM460 198h4v4h-4zM460 202h4v4h-4zM228 206h4v4h-4zM232 214h4v4h-4zM452 218h4v4h-4zM236 222h4v4h-4zM236 226h4v4h-4zM448 226h4v4h-4zM448 230h4v4h-4zM448 234h4v4h-4zM236 238h4v4h-4zM448 238h4v4h-4zM236 242h4v4h-4zM236 246h4v4h-4zM236 250h4v4h-4zM236 254h4v4h-4zM236 258h4v4h-4zM240 262h4v4h-4zM240 266h4v4h-4zM444 294h4v4h-4zM244 326h4v4h-4zM440 334h4v4h-4zM248 338h4v4h-4zM300 342h8v4h-8zM392 342h4v4h-4zM300 346h8v4h-8zM392 346h4v4h-4zM264 386h4v4h-4zM268 390h4v4h-4zM272 394h4v4h-4zM376 394h4v4h-4zM400 394h8v4h-8zM280 398h8v4h-8zM304 398h4v4h-4zM372 398h4v4h-4zM308 402h4v4h-4zM372 414h4v4h-4zM372 418h4v4h-4zM376 430h4v4h-4zM380 438h4v4h-4zM304 446h4v4h-4zM304 450h4v4h-4z"/><path fill="#545242" d="M464 198h4v4h-4zM220 202h4v4h-4zM464 202h4v4h-4zM220 206h4v4h-4zM224 214h4v4h-4zM460 214h4v4h-4zM228 222h4v4h-4zM456 222h4v4h-4zM456 226h4v4h-4zM228 246h4v4h-4zM228 250h4v4h-4zM228 254h4v4h-4zM232 262h4v4h-4zM236 266h4v4h-4zM452 286h4v4h-4zM240 298h4v4h-4zM240 302h4v4h-4zM240 306h4v4h-4zM240 310h4v4h-4zM240 314h4v4h-4zM444 314h4v4h-4zM384 342h4v4h-4zM380 346h4v4h-4zM388 346h4v4h-4zM436 346h4v4h-4zM252 358h4v4h-4zM256 370h4v4h-4zM376 398h4v4h-4zM300 402h4v4h-4zM308 410h4v4h-4zM312 422h4v4h-4zM376 426h4v4h-4zM304 438h4v4h-4z"/><path fill="#424034" d="M472 202h4v4h-4zM472 206h4v4h-4zM212 226h4v4h-4zM468 226h4v4h-4zM212 230h4v4h-4zM212 234h4v4h-4zM464 238h4v4h-4zM216 246h4v4h-4zM216 250h4v4h-4zM216 254h4v4h-4zM220 262h4v4h-4zM224 266h4v4h-4zM228 270h4v4h-4zM460 274h4v4h-4zM232 278h4v4h-4zM236 290h4v4h-4zM452 294h4v4h-4zM240 326h4v4h-4zM248 354h4v4h-4zM256 374h4v4h-4zM428 382h4v4h-4zM260 386h4v4h-4zM384 402h12v4h-12zM280 406h4v4h-4zM380 406h4v4h-4zM296 410h4v4h-4zM380 410h4v4h-4zM380 414h4v4h-4zM380 418h4v4h-4zM380 422h4v4h-4zM300 434h4v4h-4zM388 434h4v4h-4zM296 446h4v4h-4zM392 450h4v4h-4z"/><path fill="#3f3e31" d="M208 210h4v4h-4zM472 210h4v4h-4zM208 214h4v4h-4zM472 214h4v4h-4zM208 218h4v4h-4zM208 222h4v4h-4zM468 230h4v4h-4zM212 238h4v4h-4zM212 242h4v4h-4zM464 242h4v4h-4zM464 246h4v4h-4zM464 250h4v4h-4zM464 254h4v4h-4zM216 258h4v4h-4zM464 258h4v4h-4zM228 274h4v4h-4zM460 278h4v4h-4zM236 294h4v4h-4zM448 302h4v4h-4zM444 330h4v4h-4zM244 338h4v4h-4zM436 354h4v4h-4zM268 398h4v4h-4zM416 398h4v4h-4zM272 402h4v4h-4zM412 402h4v4h-4zM384 406h4v4h-4zM292 410h4v4h-4zM300 414h4v4h-4zM304 418h4v4h-4zM304 426h4v4h-4zM384 426h4v4h-4zM296 442h4v4h-4zM392 442h4v4h-4zM392 446h4v4h-4z"/><path fill="#39382d" d="M476 210h4v4h-4zM472 226h4v4h-4zM472 230h4v4h-4zM208 234h4v4h-4zM208 238h4v4h-4zM468 242h4v4h-4zM212 254h4v4h-4zM464 266h4v4h-4zM224 274h4v4h-4zM228 278h4v4h-4zM460 282h4v4h-4zM236 306h4v4h-4zM236 310h4v4h-4zM448 310h4v4h-4zM244 342h4v4h-4zM428 386h4v4h-4zM264 394h4v4h-4zM408 406h4v4h-4zM284 410h4v4h-4zM296 414h4v4h-4zM384 414h4v4h-4zM300 418h4v4h-4zM384 418h4v4h-4zM300 426h4v4h-4zM388 426h4v4h-4zM296 434h4v4h-4zM292 450h4v4h-4z"/><path fill="#36352a" d="M476 214h4v4h-4zM476 218h4v4h-4zM472 234h4v4h-4zM208 242h4v4h-4zM208 246h4v4h-4zM468 246h4v4h-4zM468 250h4v4h-4zM212 258h4v4h-4zM216 266h4v4h-4zM220 270h4v4h-4zM464 270h4v4h-4zM232 286h4v4h-4zM452 298h4v4h-4zM236 314h4v4h-4zM448 314h4v4h-4zM240 330h4v4h-4zM248 358h4v4h-4zM280 410h4v4h-4zM388 410h12v4h-12zM292 414h4v4h-4zM296 418h4v4h-4zM300 422h4v4h-4zM388 422h4v4h-4zM392 434h4v4h-4zM292 446h4v4h-4zM396 450h4v4h-4z"/><path fill="#3c3b2f" d="M472 218h4v4h-4zM472 222h4v4h-4zM208 226h4v4h-4zM208 230h4v4h-4zM468 234h4v4h-4zM468 238h4v4h-4zM212 246h4v4h-4zM212 250h4v4h-4zM216 262h4v4h-4zM464 262h4v4h-4zM220 266h4v4h-4zM224 270h4v4h-4zM232 282h4v4h-4zM456 290h4v4h-4zM236 298h4v4h-4zM236 302h4v4h-4zM448 306h4v4h-4zM440 342h4v4h-4zM252 366h4v4h-4zM424 390h4v4h-4zM420 394h4v4h-4zM276 406h4v4h-4zM388 406h20v4h-20zM288 410h4v4h-4zM384 410h4v4h-4zM304 422h4v4h-4zM384 422h4v4h-4zM300 430h4v4h-4zM388 430h4v4h-4zM296 438h4v4h-4zM392 438h4v4h-4z"/><path fill="#333228" d="M476 222h4v4h-4zM472 238h4v4h-4zM208 250h4v4h-4zM468 254h4v4h-4zM468 258h4v4h-4zM212 262h4v4h-4zM464 274h4v4h-4zM224 278h4v4h-4zM228 282h4v4h-4zM460 286h4v4h-4zM236 318h4v4h-4zM444 334h4v4h-4zM436 358h4v4h-4zM432 374h4v4h-4zM256 378h4v4h-4zM260 390h4v4h-4zM416 402h4v4h-4zM272 406h4v4h-4zM412 406h4v4h-4zM400 410h8v4h-8zM288 414h4v4h-4zM388 414h8v4h-8zM292 418h4v4h-4zM388 418h4v4h-4zM296 422h4v4h-4zM296 426h4v4h-4zM296 430h4v4h-4zM392 430h4v4h-4zM292 438h4v4h-4zM292 442h4v4h-4zM396 442h4v4h-4zM396 446h4v4h-4z"/><path fill="#302f26" d="M476 226h4v4h-4zM476 230h4v4h-4zM472 242h4v4h-4zM208 254h4v4h-4zM468 262h4v4h-4zM216 270h4v4h-4zM220 274h4v4h-4zM228 286h4v4h-4zM232 290h4v4h-4zM456 294h4v4h-4zM448 318h4v4h-4zM244 346h4v4h-4zM252 370h4v4h-4zM268 402h4v4h-4zM276 410h4v4h-4zM408 410h4v4h-4zM284 414h4v4h-4zM396 414h4v4h-4zM392 418h4v4h-4zM392 422h4v4h-4zM392 426h4v4h-4zM292 434h4v4h-4zM396 438h4v4h-4z"/><path fill="#2d2c23" d="M476 234h4v4h-4zM472 246h4v4h-4zM472 250h4v4h-4zM212 266h4v4h-4zM468 266h4v4h-4zM464 278h4v4h-4zM224 282h4v4h-4zM232 294h4v4h-4zM452 302h4v4h-4zM236 322h4v4h-4zM448 322h4v4h-4zM428 390h4v4h-4zM424 394h4v4h-4zM420 398h4v4h-4zM280 414h4v4h-4zM400 414h4v4h-4zM288 418h4v4h-4zM396 418h4v4h-4zM292 422h4v4h-4zM292 426h4v4h-4zM292 430h4v4h-4zM396 430h4v4h-4zM396 434h4v4h-4zM288 450h4v4h-4z"/><path fill="#2a2921" d="M476 238h4v4h-4zM472 254h4v4h-4zM468 270h4v4h-4zM216 274h4v4h-4zM220 278h4v4h-4zM460 290h4v4h-4zM232 298h4v4h-4zM240 334h4v4h-4zM440 346h4v4h-4zM256 382h4v4h-4zM264 398h4v4h-4zM404 414h4v4h-4zM284 418h4v4h-4zM400 418h4v4h-4zM288 422h4v4h-4zM396 422h4v4h-4zM396 426h4v4h-4zM288 442h4v4h-4zM288 446h4v4h-4zM400 446h4v4h-4zM400 450h4v4h-4z"/><path fill="#27261f" d="M476 242h4v4h-4zM472 258h4v4h-4zM212 270h4v4h-4zM464 282h4v4h-4zM224 286h4v4h-4zM228 290h4v4h-4zM448 326h4v4h-4zM444 338h4v4h-4zM244 350h4v4h-4zM248 362h4v4h-4zM416 406h4v4h-4zM272 410h4v4h-4zM412 410h4v4h-4zM408 414h4v4h-4zM400 422h4v4h-4zM288 426h4v4h-4zM288 430h4v4h-4zM288 434h4v4h-4zM288 438h4v4h-4zM400 438h4v4h-4zM400 442h4v4h-4z"/><path fill="#24231c" d="M476 246h4v4h-4zM472 262h4v4h-4zM468 274h4v4h-4zM220 282h4v4h-4zM456 298h4v4h-4zM232 302h4v4h-4zM452 306h4v4h-4zM436 362h4v4h-4zM252 374h4v4h-4zM432 378h4v4h-4zM256 386h4v4h-4zM260 394h4v4h-4zM420 402h4v4h-4zM268 406h4v4h-4zM276 414h4v4h-4zM280 418h4v4h-4zM404 418h4v4h-4zM284 422h4v4h-4zM400 426h4v4h-4zM400 430h4v4h-4zM400 434h4v4h-4z"/><path fill="#21201a" d="M476 250h4v4h-4zM472 266h4v4h-4zM212 274h4v4h-4zM216 278h4v4h-4zM464 286h4v4h-4zM224 290h4v4h-4zM228 294h4v4h-4zM232 306h4v4h-4zM232 310h4v4h-4zM240 338h4v4h-4zM404 422h4v4h-4zM284 426h4v4h-4zM284 450h4v4h-4z"/><path fill="#1e1d18" d="M476 254h4v4h-4zM468 278h4v4h-4zM220 286h4v4h-4zM460 294h4v4h-4zM452 310h4v4h-4zM232 314h4v4h-4zM440 350h4v4h-4zM244 354h4v4h-4zM432 382h4v4h-4zM428 394h4v4h-4zM424 398h4v4h-4zM264 402h4v4h-4zM416 410h4v4h-4zM412 414h4v4h-4zM408 418h4v4h-4zM280 422h4v4h-4zM404 426h4v4h-4zM284 430h4v4h-4zM404 430h4v4h-4zM284 434h4v4h-4zM284 438h4v4h-4zM284 442h4v4h-4zM404 442h4v4h-4zM284 446h4v4h-4zM404 446h4v4h-4zM404 450h4v4h-4z"/><path fill="#1b1a15" d="M472 270h4v4h-4zM216 282h4v4h-4zM228 298h4v4h-4zM456 302h4v4h-4zM448 330h4v4h-4zM240 342h4v4h-4zM248 366h4v4h-4zM436 366h4v4h-4zM432 386h4v4h-4zM420 406h4v4h-4zM272 414h4v4h-4zM276 418h4v4h-4zM408 422h4v4h-4zM404 434h4v4h-4zM404 438h4v4h-4z"/><path fill="#151510" d="M472 274h4v4h-4zM216 286h4v4h-4zM468 286h4v4h-4zM220 290h4v4h-4zM220 294h8v4h-8zM464 294h4v4h-4zM224 298h4v4h-4zM460 298h4v4h-4zM224 302h8v4h-8zM460 302h4v4h-4zM228 306h4v4h-4zM456 306h4v4h-4zM228 310h4v4h-4zM456 310h4v4h-4zM448 334h4v4h-4zM448 338h4v4h-4zM448 342h4v4h-4zM240 346h4v4h-4zM444 346h8v4h-8zM240 350h4v4h-4zM444 350h8v4h-8zM240 354h4v4h-4zM440 354h12v4h-12zM240 358h8v4h-8zM440 358h12v4h-12zM240 362h8v4h-8zM440 362h12v4h-12zM240 366h8v4h-8zM440 366h12v4h-12zM240 370h12v4h-12zM436 370h16v4h-16zM240 374h12v4h-12zM436 374h16v4h-16zM240 378h12v4h-12zM436 378h16v4h-16zM240 382h16v4h-16zM436 382h16v4h-16zM240 386h16v4h-16zM436 386h16v4h-16zM240 390h16v4h-16zM432 390h20v4h-20zM240 394h20v4h-20zM432 394h20v4h-20zM240 398h24v4h-24zM428 398h24v4h-24zM240 402h24v4h-24zM424 402h28v4h-28zM240 406h28v4h-28zM424 406h28v4h-28zM240 410h28v4h-28zM420 410h32v4h-32zM240 414h32v4h-32zM416 414h36v4h-36zM240 418h36v4h-36zM416 418h36v4h-36zM240 422h40v4h-40zM412 422h40v4h-40zM240 426h40v4h-40zM408 426h44v4h-44zM240 430h44v4h-44zM408 430h44v4h-44zM240 434h44v4h-44zM408 434h44v4h-44zM240 438h44v4h-44zM408 438h44v4h-44zM240 442h44v4h-44zM408 442h44v4h-44zM240 446h44v4h-44zM408 446h44v4h-44zM240 450h44v4h-44zM408 450h44v4h-44z"/><path fill="#181713" d="M468 282h4v4h-4zM464 290h4v4h-4zM452 314h4v4h-4zM444 342h4v4h-4zM252 378h4v4h-4zM256 390h4v4h-4zM268 410h4v4h-4zM412 418h4v4h-4zM280 426h4v4h-4z"/>
</g>
<path d="M240.9,316 A127.7,138.7 0 1,1 450.5,310" fill="none" stroke="url(#og)" stroke-width="2.5" filter="url(#b1)"/>
<path d="M450.5,310.0 C449.8,312.5 447.7,320.7 446.5,325.0 C445.3,329.3 444.6,331.8 443.5,336.0 C442.4,340.2 441.3,345.2 440.0,350.0 C438.7,354.8 436.8,360.0 435.5,365.0 C434.2,370.0 432.9,375.3 432.0,380.0 C431.1,384.7 431.2,389.8 430.0,393.0 C428.8,396.2 427.4,396.7 425.0,399.0 C422.6,401.3 419.0,404.8 415.6,406.7 C412.2,408.6 408.7,409.5 404.8,410.5 C400.9,411.5 396.6,412.1 392.0,412.5 C387.4,412.9 379.4,410.8 377.0,413.0 C374.6,415.2 377.7,422.8 377.5,426.0 C377.3,429.2 378.6,430.5 376.0,432.5 C373.4,434.5 367.2,436.9 362.0,438.2 C356.8,439.5 350.3,440.2 344.5,440.2 C338.7,440.2 332.2,439.5 327.0,438.2 C321.8,436.9 315.5,434.5 313.0,432.5 C310.5,430.5 312.1,429.2 311.8,426.0 C311.6,422.8 314.7,415.4 311.5,413.0 C308.3,410.6 296.9,412.0 292.5,411.3 C288.1,410.6 287.6,410.3 284.8,409.0 C282.0,407.7 278.5,405.3 275.7,403.6 C272.9,401.9 270.6,401.0 268.0,399.0 C265.4,397.0 262.0,394.6 260.3,391.4 C258.6,388.2 258.6,384.4 258.0,380.0 C257.4,375.6 258.1,370.0 257.0,365.0 C255.9,360.0 253.2,354.8 251.5,350.0 C249.8,345.2 248.3,340.3 247.0,336.0 C245.7,331.7 244.7,327.3 243.7,324.0 C242.7,320.7 241.4,317.3 240.9,316.0" fill="none" stroke="#2c2b20" stroke-width="2.5" filter="url(#b1)"/>
</g>
<path d="M270.0,306.0 C274.0,305.7 281.0,307.0 286.0,309.0 C291.0,311.0 296.3,315.3 300.0,318.0 C303.7,320.7 305.5,322.5 308.0,325.0 C310.5,327.5 312.8,330.3 315.0,333.0 C317.2,335.7 319.2,338.2 321.0,341.0 C322.8,343.8 324.7,347.0 326.0,350.0 C327.3,353.0 328.7,356.3 329.0,359.0 C329.3,361.7 330.2,364.0 328.0,366.0 C325.8,368.0 321.1,370.0 316.0,371.0 C310.9,372.0 303.8,372.3 297.5,372.0 C291.2,371.7 283.2,370.7 278.0,369.0 C272.8,367.3 269.3,365.2 266.0,362.0 C262.7,358.8 259.8,354.3 258.0,350.0 C256.2,345.7 255.2,341.0 255.0,336.0 C254.8,331.0 255.8,324.2 257.0,320.0 C258.2,315.8 259.8,313.3 262.0,311.0 C264.2,308.7 266.0,306.3 270.0,306.0 Z" fill="#1c1b12" filter="url(#b05)"/>
<path d="M407.0,307.0 C411.8,306.0 418.5,306.0 423.0,307.0 C427.5,308.0 431.7,310.5 434.0,313.0 C436.3,315.5 436.2,318.5 436.7,322.0 C437.1,325.5 437.1,329.2 436.7,334.0 C436.2,338.8 435.8,346.1 434.0,350.5 C432.2,354.9 429.6,357.7 425.7,360.2 C421.8,362.7 416.0,364.3 410.5,365.7 C405.0,367.1 398.4,368.1 392.6,368.4 C386.9,368.7 380.9,367.9 376.0,367.5 C371.1,367.1 365.7,367.2 363.0,366.0 C360.3,364.8 360.1,362.7 360.0,360.0 C359.9,357.3 360.7,354.0 362.5,350.0 C364.3,346.0 367.6,340.6 371.0,336.0 C374.4,331.4 378.8,326.4 382.6,322.6 C386.4,318.8 389.9,315.6 394.0,313.0 C398.1,310.4 402.2,308.0 407.0,307.0 Z" fill="#1c1b12" filter="url(#b05)"/>
<g clip-path="url(#lsockc)">
<path d="M254.0,323.0 C255.7,319.6 260.9,327.9 264.0,329.7 C267.1,331.5 270.4,332.9 272.7,334.0 C275.0,335.1 275.9,335.8 278.0,336.0 C280.1,336.2 283.4,334.9 285.6,335.5 C287.8,336.1 289.2,338.3 291.0,339.3 C292.8,340.3 294.5,340.6 296.3,341.5 C298.1,342.4 300.6,343.3 301.7,344.7 C302.8,346.1 302.6,347.4 303.0,350.0 C303.4,352.6 303.7,356.7 304.0,360.0 C304.3,363.3 305.7,367.3 305.0,370.0 C304.3,372.7 304.5,375.7 300.0,376.0 C295.5,376.3 284.3,374.0 278.0,372.0 C271.7,370.0 266.0,367.7 262.0,364.0 C258.0,360.3 255.3,356.8 254.0,350.0 C252.7,343.2 252.3,326.4 254.0,323.0 Z" fill="#767456" filter="url(#b1)"/>
<ellipse cx="292" cy="364" rx="13" ry="7" fill="#a09c79" filter="url(#b3)"/>
</g>
<g clip-path="url(#rsockc)">
<path d="M437.0,322.0 C435.2,321.2 430.3,326.1 427.0,327.5 C423.7,328.9 419.9,329.0 417.4,330.5 C414.9,332.0 414.2,335.4 411.9,336.7 C409.6,338.0 405.9,337.1 403.6,338.1 C401.3,339.1 399.9,340.9 398.0,342.5 C396.1,344.1 393.7,346.1 392.0,348.0 C390.3,349.9 390.3,352.1 388.0,354.0 C385.7,355.9 381.2,357.8 378.0,359.5 C374.8,361.2 369.3,362.6 369.0,364.0 C368.7,365.4 372.1,367.0 376.0,368.0 C379.9,369.0 386.9,370.2 392.6,370.0 C398.4,369.8 404.8,368.3 410.5,367.0 C416.2,365.7 422.8,364.7 427.0,362.0 C431.2,359.3 434.2,356.0 436.0,351.0 C437.8,346.0 437.8,336.8 438.0,332.0 C438.2,327.2 438.8,322.8 437.0,322.0 Z" fill="#878462" filter="url(#b1)"/>
<ellipse cx="408" cy="363" rx="18" ry="6" fill="#a5a17d" filter="url(#b3)"/>
<ellipse cx="376" cy="364" rx="7" ry="3" fill="#55533e" filter="url(#b2)"/>
<ellipse cx="431" cy="326" rx="7" ry="5" fill="#45433a" filter="url(#b2)"/>
</g>
<path d="M278,336 L282,334.5 L286,335.5 L290,338.5 L294,340.5 L298,340.5 L302,343.5 L305,345.5 L310,345.8" fill="none" stroke="#9d9660" stroke-width="1.1" filter="url(#b05)"/>
<path d="M385,350 L390,346 L397,342.5 L404,338.5 L410,338 L413,335 L418,330 L426,326 L433,319" fill="none" stroke="#a49e68" stroke-width="1.2" filter="url(#b05)"/>
<path d="M253.0,314.0 C253.2,317.7 253.3,330.0 254.0,336.0 C254.7,342.0 255.5,345.7 257.0,350.0 C258.5,354.3 260.5,358.7 263.0,362.0 C265.5,365.3 267.8,367.9 272.0,370.0 C276.2,372.1 282.5,373.7 288.0,374.5 C293.5,375.3 299.7,375.4 305.0,375.0 C310.3,374.6 317.5,372.5 320.0,372.0" fill="none" stroke="#767458" stroke-width="4" stroke-linecap="round" filter="url(#b15)" clip-path="url(#sil)"/>
<path d="M249.5,322.0 C249.6,324.3 249.8,331.3 250.3,336.0 C250.9,340.7 251.4,345.3 252.8,350.0 C254.2,354.7 256.3,360.2 259.0,364.0 C261.7,367.8 264.5,370.8 269.0,373.0 C273.5,375.2 280.8,376.6 286.0,377.5 C291.2,378.4 297.7,378.3 300.0,378.5" fill="none" stroke="#d2cea8" stroke-width="2.6" stroke-linecap="round" filter="url(#b1)" clip-path="url(#sil)"/>
<path d="M439.5,312.0 C439.5,315.7 440.0,327.7 439.5,334.0 C439.0,340.3 438.1,345.3 436.5,350.0 C434.9,354.7 433.1,358.9 430.0,362.0 C426.9,365.1 423.0,366.8 418.0,368.5 C413.0,370.2 406.3,371.6 400.0,372.0 C393.7,372.4 385.7,371.7 380.0,371.0 C374.3,370.3 368.3,368.5 366.0,368.0" fill="none" stroke="#9a9674" stroke-width="4" stroke-linecap="round" filter="url(#b15)" clip-path="url(#sil)"/>
<path d="M441.0,322.0 C440.9,324.3 441.2,331.3 440.5,336.0 C439.8,340.7 438.2,345.3 436.5,350.0 C434.8,354.7 433.2,360.3 430.5,364.0 C427.8,367.7 424.8,370.0 420.0,372.0 C415.2,374.0 407.8,375.5 402.0,376.0 C396.2,376.5 387.8,375.2 385.0,375.0" fill="none" stroke="#bab692" stroke-width="2.4" stroke-linecap="round" filter="url(#b1)" clip-path="url(#sil)"/>
<path d="M270.0,306.0 C274.0,305.7 281.0,307.0 286.0,309.0 C291.0,311.0 296.3,315.3 300.0,318.0 C303.7,320.7 305.5,322.5 308.0,325.0 C310.5,327.5 312.8,330.3 315.0,333.0 C317.2,335.7 319.2,338.2 321.0,341.0 C322.8,343.8 324.7,347.0 326.0,350.0 C327.3,353.0 328.7,356.3 329.0,359.0 C329.3,361.7 330.2,364.0 328.0,366.0 C325.8,368.0 321.1,370.0 316.0,371.0 C310.9,372.0 303.8,372.3 297.5,372.0 C291.2,371.7 283.2,370.7 278.0,369.0 C272.8,367.3 269.3,365.2 266.0,362.0 C262.7,358.8 259.8,354.3 258.0,350.0 C256.2,345.7 255.2,341.0 255.0,336.0 C254.8,331.0 255.8,324.2 257.0,320.0 C258.2,315.8 259.8,313.3 262.0,311.0 C264.2,308.7 266.0,306.3 270.0,306.0 Z" fill="none" stroke="#2a291c" stroke-width="1" opacity="0.2" filter="url(#b05)"/>
<path d="M407.0,307.0 C411.8,306.0 418.5,306.0 423.0,307.0 C427.5,308.0 431.7,310.5 434.0,313.0 C436.3,315.5 436.2,318.5 436.7,322.0 C437.1,325.5 437.1,329.2 436.7,334.0 C436.2,338.8 435.8,346.1 434.0,350.5 C432.2,354.9 429.6,357.7 425.7,360.2 C421.8,362.7 416.0,364.3 410.5,365.7 C405.0,367.1 398.4,368.1 392.6,368.4 C386.9,368.7 380.9,367.9 376.0,367.5 C371.1,367.1 365.7,367.2 363.0,366.0 C360.3,364.8 360.1,362.7 360.0,360.0 C359.9,357.3 360.7,354.0 362.5,350.0 C364.3,346.0 367.6,340.6 371.0,336.0 C374.4,331.4 378.8,326.4 382.6,322.6 C386.4,318.8 389.9,315.6 394.0,313.0 C398.1,310.4 402.2,308.0 407.0,307.0 Z" fill="none" stroke="#2a291c" stroke-width="1" opacity="0.2" filter="url(#b05)"/>
<path d="M258.0,377.0 C260.3,377.8 267.0,380.8 272.0,382.0 C277.0,383.2 282.7,384.3 288.0,384.5 C293.3,384.7 298.9,384.2 304.0,383.0 C309.1,381.8 316.1,378.0 318.5,377.0" fill="none" stroke="#3a3828" stroke-width="1.1" opacity="0.4" filter="url(#b05)" clip-path="url(#sil)"/>
<path d="M432.0,373.0 C429.7,374.2 423.0,378.2 418.0,380.0 C413.0,381.8 407.3,382.9 402.0,383.5 C396.7,384.1 391.2,384.2 386.0,383.5 C380.8,382.8 373.5,379.8 371.0,379.0" fill="none" stroke="#3a3828" stroke-width="1.1" opacity="0.4" filter="url(#b05)" clip-path="url(#sil)"/>
<path d="M344,367 C341.5,378 336.5,392 331.5,403 L358,402.5 C353,392 348,378 345,367 Z" fill="#2c2b21" filter="url(#b05)"/>
<path d="M343.8,367 C342,378 337,392 331.5,403 C333,403.2 335,402.5 337,401 C339,394 341,386 344.3,372 Z" fill="#17160f" filter="url(#b05)"/>
<path d="M345,367 C348,378 353,392 358,402.5 C356.5,402.7 354.5,402 352.5,400.5 C350.5,394 348,386 344.8,372 Z" fill="#17160f" filter="url(#b05)"/>
<path d="M335.5,401.5 C338,397 341,392 344.6,390.5 C348,392 351,397 354,401 C350,400 347.5,398.5 344.6,398.5 C341.5,398.5 339,400 335.5,401.5 Z" fill="#b0ac88" filter="url(#b05)"/>
<path d="M336.5,402.5 C340,400 342,399 344.6,399 C347,399 350,400 353.5,402 L353.5,404 L336.5,404 Z" fill="#9c9876" filter="url(#b05)"/>
<path d="M342.6,368 C341,378 336,392 330.3,403" fill="none" stroke="#cfcba6" stroke-width="1.1" opacity="0.65" filter="url(#b05)"/>
<path d="M346.3,368 C349,378 354,392 359.3,402.5" fill="none" stroke="#cfcba6" stroke-width="1.1" opacity="0.5" filter="url(#b05)"/>
<path d="M328,358 C336,356.5 354,356.5 362,358" fill="none" stroke="#55533f" stroke-width="1.2" opacity="0.7" filter="url(#b05)"/>
<path d="M328,360.5 C336,359 354,359 362,360.5" fill="none" stroke="#bdb995" stroke-width="1.6" filter="url(#b05)"/>
<path d="M329,363 C337,361.5 353,361.5 361,363" fill="none" stroke="#55533f" stroke-width="1.1" opacity="0.6" filter="url(#b05)"/>
<circle cx="344.3" cy="364.8" r="1.3" fill="#2a291e"/>
<path d="M313.5,432 C325,440 364,440 376,432 L375.5,436.5 C364,445.5 325,445.5 314,436.5 Z" fill="#232219"/>
<rect x="313.3" y="433.3" width="4.4" height="5.0" rx="2" fill="#7e7b5f"/>
<rect x="314.1" y="435.5" width="2.3" height="1.4" rx="1.1" fill="#9a9676" filter="url(#b05)"/>
<rect x="318.0" y="434.7" width="4.4" height="6.2" rx="2" fill="#7e7b5f"/>
<rect x="318.8" y="436.9" width="2.3" height="2.6" rx="1.1" fill="#9a9676" filter="url(#b05)"/>
<rect x="322.8" y="435.9" width="4.4" height="6.2" rx="2" fill="#7e7b5f"/>
<rect x="323.6" y="438.1" width="2.3" height="2.6" rx="1.1" fill="#9a9676" filter="url(#b05)"/>
<rect x="327.8" y="436.8" width="4.4" height="7.2" rx="2" fill="#7e7b5f"/>
<rect x="328.6" y="439.0" width="2.3" height="3.6" rx="1.1" fill="#9a9676" filter="url(#b05)"/>
<rect x="333.1" y="437.5" width="4.4" height="7.2" rx="2" fill="#7e7b5f"/>
<rect x="333.9" y="439.7" width="2.3" height="3.6" rx="1.1" fill="#9a9676" filter="url(#b05)"/>
<rect x="338.7" y="437.9" width="4.4" height="7.2" rx="2" fill="#7e7b5f"/>
<rect x="339.5" y="440.1" width="2.3" height="3.6" rx="1.1" fill="#9a9676" filter="url(#b05)"/>
<rect x="344.6" y="438.0" width="4.4" height="7.2" rx="2" fill="#7e7b5f"/>
<rect x="345.4" y="440.2" width="2.3" height="3.6" rx="1.1" fill="#9a9676" filter="url(#b05)"/>
<rect x="350.5" y="437.6" width="4.4" height="7.2" rx="2" fill="#7e7b5f"/>
<rect x="351.3" y="439.8" width="2.3" height="3.6" rx="1.1" fill="#9a9676" filter="url(#b05)"/>
<rect x="356.1" y="436.9" width="4.4" height="7.2" rx="2" fill="#7e7b5f"/>
<rect x="356.9" y="439.1" width="2.3" height="3.6" rx="1.1" fill="#9a9676" filter="url(#b05)"/>
<rect x="361.5" y="435.9" width="4.4" height="6.2" rx="2" fill="#7e7b5f"/>
<rect x="362.3" y="438.1" width="2.3" height="2.6" rx="1.1" fill="#9a9676" filter="url(#b05)"/>
<rect x="366.4" y="434.8" width="4.4" height="6.2" rx="2" fill="#7e7b5f"/>
<rect x="367.2" y="437.0" width="2.3" height="2.6" rx="1.1" fill="#9a9676" filter="url(#b05)"/>
<rect x="371.0" y="433.4" width="4.4" height="5.0" rx="2" fill="#7e7b5f"/>
<rect x="371.8" y="435.6" width="2.3" height="1.4" rx="1.1" fill="#9a9676" filter="url(#b05)"/>
<path d="M312,428.5 C313,434 330,439.3 344.5,439.5 C359,439.3 376,434 377,428.5 L377,427 C374,433 359,437 344.5,437.2 C330,437 315,433 312,427 Z" fill="#8a8769" filter="url(#b05)"/>
<path d="M322.0,415 L320.9,434" stroke="#7e7a5e" stroke-width="0.8" opacity="0.6"/>
<path d="M327.0,415 L326.1,434" stroke="#7e7a5e" stroke-width="0.8" opacity="0.6"/>
<path d="M332.0,415 L331.4,434" stroke="#7e7a5e" stroke-width="0.8" opacity="0.6"/>
<path d="M337.0,415 L336.6,434" stroke="#7e7a5e" stroke-width="0.8" opacity="0.6"/>
<path d="M342.0,415 L341.9,434" stroke="#7e7a5e" stroke-width="0.8" opacity="0.6"/>
<path d="M348.0,415 L348.1,434" stroke="#7e7a5e" stroke-width="0.8" opacity="0.6"/>
<path d="M353.0,415 L353.4,434" stroke="#7e7a5e" stroke-width="0.8" opacity="0.6"/>
<path d="M358.0,415 L358.6,434" stroke="#7e7a5e" stroke-width="0.8" opacity="0.6"/>
<path d="M363.0,415 L363.9,434" stroke="#7e7a5e" stroke-width="0.8" opacity="0.6"/>
<path d="M368.0,415 L369.1,434" stroke="#7e7a5e" stroke-width="0.8" opacity="0.6"/>
<path d="M318.5,373.0 L319.0,380.0 L316.5,386.0 L315.0,392.0 L312.0,398.0 L310.0,403.0 L307.0,407.0" fill="none" stroke="#2e2c1e" stroke-width="1" opacity="0.8"/>
<path d="M370.0,375.0 L371.0,382.0 L372.5,388.0 L373.0,396.0 L375.0,401.0 L376.4,405.0" fill="none" stroke="#2e2c1e" stroke-width="1" opacity="0.8"/>
<path d="M234.5,197.1 L240.6,189.5 L246.7,184.9 L248.2,183.4 L254.3,177.3 L260.3,171.3 L265.7,167.4 L271.0,165.2 L274.0,163.6 L278.6,163.6 L281.6,164.4 L283.1,162.1 L287.7,157.6 L293.8,152.3 L299.8,152.3 L304.4,154.5 L308.9,152.3 L313.5,150.7 L316.5,153.0 L319.6,150.7 L328.7,150.0 L333.3,151.5 L340.8,147.7 L347.3,148.4 L352.5,149.2 L357.6,153.5 L362.8,157.0 L369.7,157.9 L376.6,157.0 L381.8,159.6 L387.0,163.0 L392.1,162.2 L397.3,163.9 L400.7,169.1 L405.9,171.6 L411.1,175.1 L414.5,178.5 L419.7,177.7 L423.2,181.1 L428.3,188.0 L433.5,193.2 L438.7,200.1 L443.8,207.0 L449.0,213.9 L451.6,217.3" fill="none" stroke="#f0edcc" stroke-width="1.40" stroke-linejoin="round" opacity="0.95"/>
<path d="M234.1,195.8 L240.2,188.2 L246.3,183.6 L247.8,182.1 L253.9,176.0 L259.9,170.0 L265.3,166.1 L270.6,163.9 L273.6,162.3 L278.2,162.3 L281.2,163.1 L282.7,160.8 L287.3,156.3 L293.4,151.0 L299.4,151.0 L304.0,153.2 L308.5,151.0 L313.1,149.4 L316.1,151.7 L319.2,149.4 L328.3,148.7 L332.9,150.2 L340.4,146.4 L346.9,147.1 L352.1,147.9 L357.2,152.2 L362.4,155.7 L369.3,156.6 L376.2,155.7 L381.4,158.3 L386.6,161.7 L391.7,160.9 L396.9,162.6 L400.3,167.8 L405.5,170.3 L410.7,173.8 L414.1,177.2 L419.3,176.4 L422.8,179.8 L427.9,186.7 L433.1,191.9 L438.3,198.8 L443.4,205.7 L448.6,212.6 L451.2,216.0" fill="none" stroke="#2e2c1e" stroke-width="1.80" stroke-linejoin="round"/>
<path d="M459.3,181.9 L459.2,184.5 L458.4,187.0 L458.2,189.7 L457.6,192.2 L457.5,195.7 L457.6,199.1 L456.1,201.2 L455.5,203.7 L454.3,205.9 L452.4,207.7 L450.8,210.1 L450.4,213.0 L448.9,215.5 L448.0,218.1 L445.7,220.1 L445.1,222.9 L443.8,225.3 L442.6,227.5 L442.3,230.1 L441.3,232.4 L441.2,235.0 L439.8,237.2 L438.7,239.5 L438.4,242.0 L437.4,244.7 L436.1,247.3 L435.3,250.0 L435.1,253.0 L433.2,255.3 L432.5,258.1 L431.6,260.8 L431.0,263.6 L430.5,266.3 L429.0,268.8 L428.7,271.5 L429.4,274.2 L429.3,276.9 L429.2,279.6 L429.6,282.2 L429.5,285.0 L430.3,287.6 L431.5,290.2 L432.0,293.1 L433.6,295.6 L434.0,298.5 L435.6,301.0 L435.7,304.2 L437.5,307.1 L437.6,310.3" fill="none" stroke="#e8e5c2" stroke-width="1.40" stroke-linejoin="round" opacity="0.75"/>
<path d="M460.7,181.6 L460.6,184.2 L459.8,186.7 L459.6,189.4 L459.0,191.9 L458.9,195.4 L459.0,198.8 L457.5,200.9 L456.9,203.4 L455.7,205.6 L453.8,207.4 L452.2,209.8 L451.8,212.7 L450.3,215.2 L449.4,217.8 L447.1,219.8 L446.5,222.6 L445.2,225.0 L444.0,227.2 L443.7,229.8 L442.7,232.1 L442.6,234.7 L441.2,236.9 L440.1,239.2 L439.8,241.7 L438.8,244.4 L437.5,247.0 L436.7,249.7 L436.5,252.7 L434.6,255.0 L433.9,257.8 L433.0,260.5 L432.4,263.3 L431.9,266.0 L430.4,268.5 L430.1,271.2 L430.8,273.9 L430.7,276.6 L430.6,279.3 L431.0,281.9 L430.9,284.7 L431.7,287.3 L432.9,289.9 L433.4,292.8 L435.0,295.3 L435.4,298.2 L437.0,300.7 L437.1,303.9 L438.9,306.8 L439.0,310.0" fill="none" stroke="#2e2c1e" stroke-width="1.60" stroke-linejoin="round"/>
<path d="M229.3,176.4 L229.4,179.0 L229.6,181.5 L229.8,184.1 L230.0,186.7 L230.6,189.2 L231.2,191.7 L230.9,194.3 L232.5,196.7 L232.2,199.3 L231.9,202.0 L232.6,204.5 L233.1,207.0 L234.2,209.5 L236.3,211.4 L239.0,213.6 L240.8,216.6 L242.6,218.5 L244.3,220.4 L246.6,223.1 L248.4,226.2 L249.0,228.7 L249.6,231.3 L251.0,233.6 L251.4,236.2 L251.9,238.8 L252.3,241.4 L252.4,244.1 L253.2,246.6 L254.7,249.0 L254.4,251.8 L256.0,254.1 L256.1,256.8 L256.6,259.4 L257.9,261.8 L258.7,264.3 L258.1,267.2 L259.7,269.5 L259.9,272.2 L260.8,275.0 L260.2,278.1 L260.9,280.9 L261.9,283.7 L261.7,286.6 L260.3,289.3 L260.3,292.2 L259.9,295.1 L258.7,297.9 L258.4,301.0 L256.5,303.5 L256.1,306.6 L255.2,309.1 L254.2,311.6 L254.2,314.4" fill="none" stroke="#dcd9b4" stroke-width="1.30" stroke-linejoin="round" opacity="0.65"/>
<path d="M228.0,176.0 L228.1,178.6 L228.3,181.1 L228.5,183.7 L228.7,186.3 L229.3,188.8 L229.9,191.3 L229.6,193.9 L231.2,196.3 L230.9,198.9 L230.6,201.6 L231.3,204.1 L231.8,206.6 L232.9,209.1 L235.0,211.0 L237.7,213.2 L239.5,216.2 L241.3,218.1 L243.0,220.0 L245.3,222.7 L247.1,225.8 L247.7,228.3 L248.3,230.9 L249.7,233.2 L250.1,235.8 L250.6,238.4 L251.0,241.0 L251.1,243.7 L251.9,246.2 L253.4,248.6 L253.1,251.4 L254.7,253.7 L254.8,256.4 L255.3,259.0 L256.6,261.4 L257.4,263.9 L256.8,266.8 L258.4,269.1 L258.6,271.8 L259.5,274.6 L258.9,277.7 L259.6,280.5 L260.6,283.3 L260.4,286.2 L259.0,288.9 L259.0,291.8 L258.6,294.7 L257.4,297.5 L257.1,300.6 L255.2,303.1 L254.8,306.2 L253.9,308.7 L252.9,311.2 L252.9,314.0" fill="none" stroke="#2e2c1e" stroke-width="1.70" stroke-linejoin="round"/>
<path d="M372.4,195.7 Q374.9,213.1 382.0,229.2 Q379.5,211.8 372.4,195.7 Z" fill="#e8e5c4" opacity="0.75" filter="url(#b05)"/>
<path d="M374.3,195.8 Q377.6,213.0 383.9,229.3 Q380.6,212.1 374.3,195.8 Z" fill="#e8e5c4" opacity="0.45" filter="url(#b05)"/>
<path d="M373.4,195.5 Q376.7,212.7 383.0,229.0 Q379.7,211.8 373.4,195.5 Z" fill="#4a4836" filter="url(#b05)"/>
<path d="M384.4,209.2 Q386.1,219.1 390.6,228.2 Q388.9,218.3 384.4,209.2 Z" fill="#e8e5c4" opacity="0.75" filter="url(#b05)"/>
<path d="M386.3,209.3 Q388.5,219.1 392.5,228.3 Q390.3,218.5 386.3,209.3 Z" fill="#e8e5c4" opacity="0.45" filter="url(#b05)"/>
<path d="M385.4,209.0 Q387.6,218.8 391.6,228.0 Q389.4,218.2 385.4,209.0 Z" fill="#4a4836" filter="url(#b05)"/>
<path d="M288.0,263.2 Q290.7,277.8 298.0,290.8 Q295.3,276.2 288.0,263.2 Z" fill="#e8e5c4" opacity="0.75" filter="url(#b05)"/>
<path d="M289.9,263.3 Q293.4,277.6 299.9,290.9 Q296.4,276.6 289.9,263.3 Z" fill="#e8e5c4" opacity="0.45" filter="url(#b05)"/>
<path d="M289.0,263.0 Q292.5,277.3 299.0,290.6 Q295.5,276.3 289.0,263.0 Z" fill="#4a4836" filter="url(#b05)"/>
<path d="M289.6,284.7 Q292.6,292.7 298.0,299.2 Q295.0,291.2 289.6,284.7 Z" fill="#e8e5c4" opacity="0.75" filter="url(#b05)"/>
<path d="M291.5,284.8 Q294.9,292.5 299.9,299.3 Q296.5,291.6 291.5,284.8 Z" fill="#e8e5c4" opacity="0.45" filter="url(#b05)"/>
<path d="M290.6,284.5 Q294.0,292.2 299.0,299.0 Q295.6,291.3 290.6,284.5 Z" fill="#4a4836" filter="url(#b05)"/>
<path d="M305.0,300.8 Q308.5,311.5 315.7,320.0 Q312.2,309.3 305.0,300.8 Z" fill="#e8e5c4" opacity="0.75" filter="url(#b05)"/>
<path d="M306.9,300.9 Q311.0,311.2 317.6,320.1 Q313.5,309.8 306.9,300.9 Z" fill="#e8e5c4" opacity="0.45" filter="url(#b05)"/>
<path d="M306.0,300.6 Q310.1,310.9 316.7,319.8 Q312.6,309.5 306.0,300.6 Z" fill="#4a4836" filter="url(#b05)"/>
<path d="M389.0,263.2 Q380.3,270.9 374.4,280.8 Q383.1,273.1 389.0,263.2 Z" fill="#e8e5c4" opacity="0.75" filter="url(#b05)"/>
<path d="M390.9,263.3 Q382.7,271.3 376.3,280.9 Q384.5,272.9 390.9,263.3 Z" fill="#e8e5c4" opacity="0.45" filter="url(#b05)"/>
<path d="M390.0,263.0 Q381.8,271.0 375.4,280.6 Q383.6,272.6 390.0,263.0 Z" fill="#4a4836" filter="url(#b05)"/>
<path d="M413.3,246.2 Q411.9,250.8 414.8,254.7 Q416.2,250.1 413.3,246.2 Z" fill="#e8e5c4" opacity="0.75" filter="url(#b05)"/>
<path d="M415.2,246.3 Q414.5,250.8 416.7,254.8 Q417.4,250.3 415.2,246.3 Z" fill="#e8e5c4" opacity="0.45" filter="url(#b05)"/>
<path d="M414.3,246.0 Q413.6,250.5 415.8,254.5 Q416.5,250.0 414.3,246.0 Z" fill="#4a4836" filter="url(#b05)"/>
<path d="M413.3,279.2 Q413.2,285.7 416.5,291.2 Q416.6,284.7 413.3,279.2 Z" fill="#e8e5c4" opacity="0.75" filter="url(#b05)"/>
<path d="M415.2,279.3 Q415.6,285.6 418.4,291.3 Q418.0,285.0 415.2,279.3 Z" fill="#e8e5c4" opacity="0.45" filter="url(#b05)"/>
<path d="M414.3,279.0 Q414.7,285.3 417.5,291.0 Q417.1,284.7 414.3,279.0 Z" fill="#4a4836" filter="url(#b05)"/>
<circle cx="385.4" cy="253.1" r="1.4" fill="#e4e1be" opacity="0.8"/>
<circle cx="384.8" cy="252.4" r="1.3" fill="#3a3828"/>
<circle cx="423.0" cy="287.7" r="0.9" fill="#e4e1be" opacity="0.8"/>
<circle cx="422.4" cy="287.0" r="0.8" fill="#3a3828"/>
<circle cx="426.1" cy="290.7" r="0.9" fill="#e4e1be" opacity="0.8"/>
<circle cx="425.5" cy="290.0" r="0.8" fill="#3a3828"/>
<circle cx="367.6" cy="343.7" r="1.2" fill="#e4e1be" opacity="0.8"/>
<circle cx="367.0" cy="343.0" r="1.1" fill="#3a3828"/>
<circle cx="269.1" cy="341.2" r="1.3" fill="#e4e1be" opacity="0.8"/>
<circle cx="268.5" cy="340.5" r="1.2" fill="#3a3828"/>
<circle cx="273.6" cy="349.7" r="1.1" fill="#e4e1be" opacity="0.8"/>
<circle cx="273.0" cy="349.0" r="1.0" fill="#3a3828"/>
<circle cx="275.6" cy="352.7" r="1.0" fill="#e4e1be" opacity="0.8"/>
<circle cx="275.0" cy="352.0" r="0.9" fill="#3a3828"/>
<ellipse cx="401" cy="267" rx="2.5" ry="2" fill="#6e6b52" opacity="0.6" filter="url(#b05)"/>
<ellipse cx="419.7" cy="223" rx="2.5" ry="3" fill="#6e6b52" opacity="0.5" filter="url(#b05)"/>
<path d="M309.7,236.3 L307.0,257.8" stroke="#4a4834" stroke-width="1" stroke-dasharray="1.5,1.5"/>
<path d="M323.0,248.4 L321.8,259.0" stroke="#4a4834" stroke-width="1" stroke-dasharray="1.5,1.5"/>
<path d="M372.0,381.0 L380.0,383.5 L390.0,385.0 L398.0,386.0 L405.0,387.0" fill="none" stroke="#2e2c1e" stroke-width="0.9" opacity="0.8"/>
<path d="M421.0,375.0 L423.0,379.0 L426.0,382.0" fill="none" stroke="#2e2c1e" stroke-width="0.9" opacity="0.7"/>
</svg>
</body></html>
